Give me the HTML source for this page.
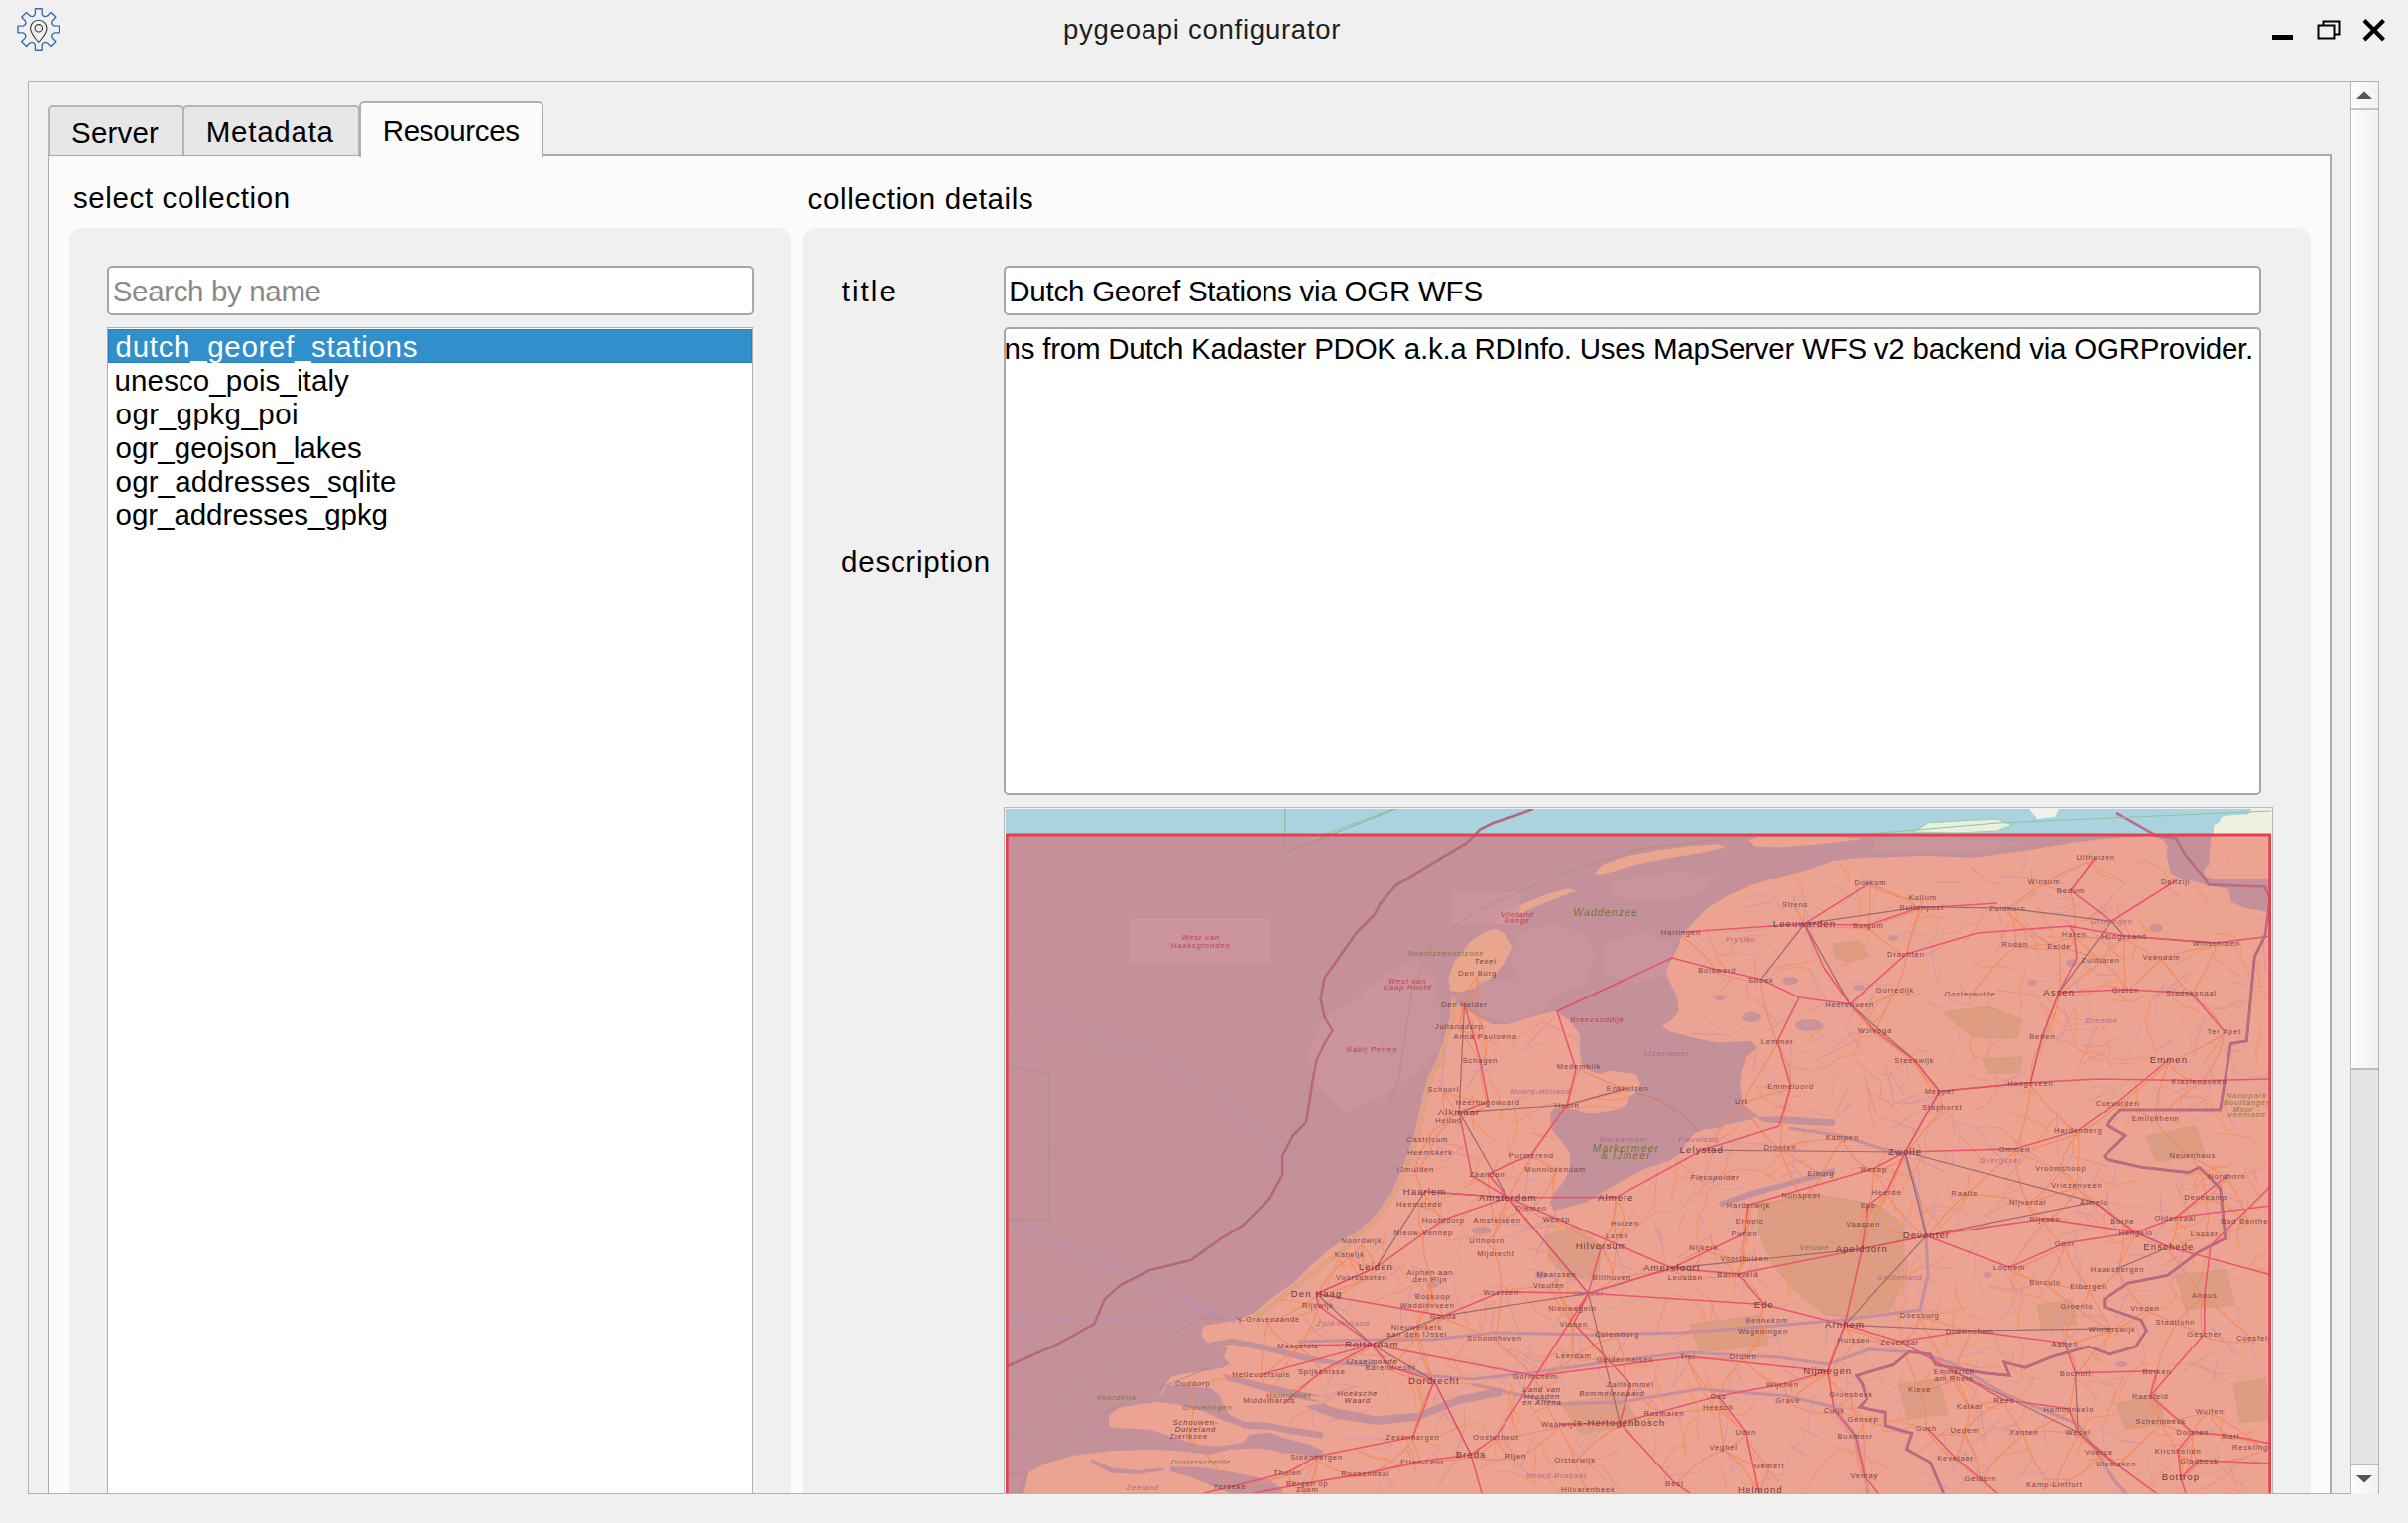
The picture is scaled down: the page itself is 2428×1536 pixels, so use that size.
<!DOCTYPE html>
<html><head><meta charset="utf-8">
<style>
*{margin:0;padding:0;box-sizing:border-box}
html,body{width:2428px;height:1536px;overflow:hidden;background:#f0f0f0;font-family:"Liberation Sans",sans-serif;color:#000}
.a{position:absolute}
.t{position:absolute;white-space:nowrap;font-size:29.5px;line-height:1}
</style></head><body>
<!-- title bar -->
<svg class="a" style="left:0;top:0" width="80" height="60" viewBox="0 0 80 60">
  <path fill="none" stroke="#3b6fa3" stroke-width="1.4" stroke-linejoin="round" d="M35.40 13.70 L35.40 8.70 L42.20 8.70 L42.20 13.70 Q43.58 17.95 47.57 15.92 L47.57 15.92 L51.10 12.39 L55.91 17.20 L52.38 20.73 Q50.35 24.72 54.60 26.10 L54.60 26.10 L59.60 26.10 L59.60 32.90 L54.60 32.90 Q50.35 34.28 52.38 38.27 L52.38 38.27 L55.91 41.80 L51.10 46.61 L47.57 43.08 Q43.58 41.05 42.20 45.30 L42.20 45.30 L42.20 50.30 L35.40 50.30 L35.40 45.30 Q34.02 41.05 30.03 43.08 L30.03 43.08 L26.50 46.61 L21.69 41.80 L25.22 38.27 Q27.25 34.28 23.00 32.90 L23.00 32.90 L18.00 32.90 L18.00 26.10 L23.00 26.10 Q27.25 24.72 25.22 20.73 L25.22 20.73 L21.69 17.20 L26.50 12.39 L30.03 15.92 Q34.02 17.95 35.40 13.70 Z"/>
  <g fill="none" stroke="#3a3a3a" stroke-width="1.1">
    <path d="M38.8 42.5 C34 37 30.6 33 30.6 28.4 A8.2 8.2 0 0 1 47 28.4 C47 33 43.6 37 38.8 42.5 Z"/>
    <circle cx="38.8" cy="28.3" r="3.7"/>
  </g>
</svg>
<div class="t" id="wtitle" style="left:1072px;top:16.3px;font-size:27.5px;letter-spacing:0.75px;color:#1e1e1e">pygeoapi configurator</div>
<div class="a" style="left:2291px;top:35px;width:21px;height:5px;background:#000"></div>
<svg class="a" style="left:2330px;top:15px" width="36" height="30" viewBox="2330 15 36 30">
  <rect x="2342.5" y="21.5" width="16" height="13" fill="none" stroke="#000" stroke-width="2"/>
  <rect x="2337.5" y="25.5" width="16" height="13" fill="#f0f0f0" stroke="#000" stroke-width="2"/>
</svg>
<svg class="a" style="left:2378px;top:14px" width="32" height="32" viewBox="2378 14 32 32">
  <path d="M2384 20.5 L2403.5 40 M2403.5 20.5 L2384 40" stroke="#000" stroke-width="4.2"/>
</svg>

<!-- outer scroll frame -->
<div class="a" style="left:28px;top:82px;width:2371px;height:1425px;border:1px solid #b2b2b2;overflow:hidden" id="frame">
</div>

<!-- tab pane -->
<div class="a" style="left:48px;top:155px;width:2303px;height:1351px;background:#fbfbfb;border:2px solid #a9a9a9;border-left:1px solid #ababab;border-bottom:none"></div>
<!-- tabs -->
<div class="a" style="left:48px;top:106px;width:138px;height:50px;background:#e7e7e7;border:2px solid #b5b5b5;border-bottom:none;border-radius:5px 5px 0 0"></div>
<div class="a" style="left:184px;top:106px;width:179px;height:50px;background:#e7e7e7;border:2px solid #b5b5b5;border-bottom:none;border-radius:5px 5px 0 0"></div>
<div class="a" style="left:362px;top:102px;width:186px;height:56px;background:#fbfbfb;border:2px solid #b0b0b0;border-bottom:none;border-radius:5px 5px 0 0"></div>
<div class="t" style="left:72px;top:119px;letter-spacing:0.2px">Server</div>
<div class="t" style="left:207.7px;top:118.4px;letter-spacing:0.757px">Metadata</div>
<div class="t" style="left:385.8px;top:117.2px;letter-spacing:-0.35px">Resources</div>

<div class="t" style="left:73.9px;top:184.8px;letter-spacing:0.631px">select collection</div>
<div class="t" style="left:814.6px;top:185.8px;letter-spacing:0.629px">collection details</div>

<!-- left group -->
<div class="a" style="left:70px;top:230px;width:728px;height:1300px;background:#f0f0f0;border-radius:13px"></div>
<div class="a" style="left:108px;top:268px;width:652px;height:50px;background:#fff;border:2px solid #a6a6a6;border-radius:5px"></div>
<div class="t" style="left:113.8px;top:278.7px;letter-spacing:-0.354px;color:#8a8a8a">Search by name</div>
<div class="a" style="left:108px;top:330px;width:651px;height:1200px;background:#fff;border:1px solid #b0b0b0"></div>
<div class="a" style="left:109px;top:332px;width:649px;height:34px;background:#3190cc;border:1px solid #2b7dba"></div>
<div class="t" style="left:116.6px;top:334.9px;letter-spacing:0.675px;color:#fff">dutch_georef_stations</div>
<div class="t" style="left:115.6px;top:369.2px;letter-spacing:0.106px">unesco_pois_italy</div>
<div class="t" style="left:116.6px;top:402.7px;letter-spacing:0.473px">ogr_gpkg_poi</div>
<div class="t" style="left:116.6px;top:437px;letter-spacing:0.025px">ogr_geojson_lakes</div>
<div class="t" style="left:116.6px;top:470.5px;letter-spacing:0.126px">ogr_addresses_sqlite</div>
<div class="t" style="left:116.6px;top:504.1px;letter-spacing:-0.065px">ogr_addresses_gpkg</div>

<!-- right group -->
<div class="a" style="left:810px;top:230px;width:1520px;height:1300px;background:#f0f0f0;border-radius:13px"></div>
<div class="t" style="left:848.7px;top:278.6px;letter-spacing:2.075px">title</div>
<div class="t" style="left:848.1px;top:551.9px;letter-spacing:0.74px">description</div>
<div class="a" style="left:1012px;top:268px;width:1268px;height:50px;background:#fff;border:2px solid #a6a6a6;border-radius:5px"></div>
<div class="t" style="left:1017.3px;top:278.6px;letter-spacing:-0.234px">Dutch Georef Stations via OGR WFS</div>
<div class="a" style="left:1012px;top:330px;width:1268px;height:472px;background:#fff;border:2px solid #a6a6a6;border-radius:5px;overflow:hidden">
  <div class="t" style="right:6px;top:4.8px;letter-spacing:-0.239px">ns from Dutch Kadaster PDOK a.k.a RDInfo. Uses MapServer WFS v2 backend via OGRProvider.</div>
</div>

<!-- map -->
<div class="a" style="left:1012px;top:814px;width:1280px;height:700px;border:1px solid #b8b8b8;background:#f0f0f0"></div>
<div class="a" style="left:1014px;top:816px;width:1276px;height:690px;overflow:hidden"><svg width="1276" height="690" viewBox="0 0 1276 690"><rect x="0" y="0" width="1276" height="26" fill="#aad3df"/><path d="M1217.7 26 L1218.3 16.6 L1223.7 13.3 L1226.3 8 L1233 6.6 L1253 5.3 L1256 0 L1276 0 L1276 26 Z" fill="#eef1e0"/><path d="M915 23 L930 14 L960 12 L1000 10 L1015 16 L1000 22 L960 24 Z" fill="#e8efe0" stroke="#9cd0a8" stroke-width="1.2"/><path d="M1032 0 L1062 0 L1058 8 L1040 10 Z" fill="#f1f1ea"/><rect x="0" y="26" width="1276" height="664" fill="#c4919a"/><path d="M449.2 190.0 L451.0 193.9 L474.2 208.9 L490.8 217.2 L505.8 217.2 L527.4 210.5 L552.3 203.9 L555.6 203.9 L672.5 149.5 L678.8 137.0 L680.9 128.7 L691.2 116.3 L707.8 99.7 L728.6 87.2 L751.4 76.8 L780.5 68.5 L811.7 60.2 L834.5 51.9 L853.2 49.8 L886.0 47.8 L876.0 48.7 L926.3 47.0 L976.7 48.7 L1027.0 41.9 L1077.3 33.6 L1110.9 29.4 L1144.5 27.7 L1144.5 25.2 L1278.7 25.2 L1278.7 200.0 L1277.9 690.0 L18.6 689.9 L22.6 669.6 L39.9 660.3 L66.4 652.3 L106.3 647.0 L105.0 633.7 L103.7 612.5 L113.0 604.5 L132.9 600.5 L152.8 597.9 L162.1 579.2 L167.4 572.6 L186.0 568.6 L207.3 566.0 L219.3 563.3 L225.9 559.3 L220.1 552.4 L224.3 542.0 L205.6 539.9 L197.3 531.6 L199.3 521.2 L224.3 517.1 L234.6 515.0 L249.2 508.8 L269.9 492.1 L290.7 477.6 L307.3 461.0 L323.9 446.5 L340.5 434.0 L353.5 427.7 L374.8 407.8 L389.4 386.5 L398.7 365.2 L408.0 340.0 L411.4 332.2 L415.9 311.0 L420.5 289.7 L426.6 268.4 L433.8 255.1 L441.2 233.9 L447.8 210.0 Z" fill="#eda392"/><path d="M448.3 182.7 L446.2 170.3 L452.4 153.7 L467.0 135.0 L481.5 124.6 L494.0 120.4 L504.4 126.7 L511.6 139.1 L504.4 153.7 L489.8 170.3 L473.2 180.6 L456.6 184.8 Z" fill="#e9a58e"/><path d="M494.0 113.2 L506.4 101.7 L527.2 93.4 L548.0 85.1 L568.7 79.9 L575.0 83.1 L562.5 87.2 L541.7 95.5 L531.3 99.7 L514.7 108.0 L498.1 114.2 Z" fill="#e9a58e"/><path d="M593.6 64.4 L601.9 56.1 L624.8 47.8 L655.9 41.5 L687.1 37.4 L718.2 35.3 L726.5 38.4 L697.5 44.6 L666.3 49.8 L635.2 56.1 L614.4 62.3 L597.8 66.4 Z" fill="#e9a58e"/><path d="M749.4 31.1 L759.8 28.0 L801.3 28.0 L842.8 28.0 L863.6 30.1 L822.0 35.3 L780.5 38.4 L755.6 37.4 Z" fill="#e9a58e"/><path d="M555.6 203.9 L557.3 205.5 L568.9 213.8 L578.9 227.1 L578.9 243.7 L580.5 257.0 L588.8 263.7 L598.8 267.0 L608.8 263.7 L635.3 267.0 L640.3 277.0 L635.3 285.3 L628.7 290.2 L627.0 296.9 L618.7 301.9 L602.1 305.2 L585.5 306.9 L577.2 303.5 L562.2 300.2 L552.3 301.9 L549.0 308.5 L550.6 323.5 L560.6 335.1 L568.9 346.7 L568.9 363.3 L562.2 376.6 L552.3 388.3 L549.0 396.6 L552.3 404.9 L560.6 403.2 L585.5 396.6 L602.1 386.6 L618.7 376.6 L643.6 363.3 L668.6 355.0 L681.8 346.7 L685.2 338.4 L695.1 326.8 L705.1 323.5 L718.4 321.8 L726.7 318.5 L751.6 313.5 L759.9 310.2 L743.3 296.9 L740.0 280.3 L741.6 263.7 L746.6 250.4 L758.3 240.4 L751.6 233.8 L718.4 235.4 L693.5 230.4 L668.6 223.8 L661.9 218.8 L671.9 212.2 L678.5 203.9 L676.9 188.9 L668.6 172.3 L665.2 164.0 L672.5 149.5 Z" fill="#c4919a"/><path d="M718.4 396.6 L751.6 384.9 L784.8 376.6 L818.1 366.7 L836.0 361.7 L836.0 368.3 L809.8 375.0 L768.2 386.6 L735.0 396.6 L721.7 401.5 Z" fill="#c4919a"/><path d="M756.6 311.0 L784.8 310.2 L809.8 311.8 L836.0 313.5 L836.0 320.1 L801.4 318.5 L764.9 316.0 Z" fill="#c4919a"/><path d="M152.8 597.9 L163.5 580.6 L186.0 581.9 L207.3 584.6 L215.3 591.2 L219.3 600.5 L225.9 611.1 L239.2 617.8 L265.8 619.1 L263.1 623.1 L239.2 623.1 L219.3 616.5 L199.3 607.2 L172.8 600.5 Z" fill="#c4919a"/><path d="M219.3 569.9 L239.2 573.9 L265.8 580.6 L292.4 585.9 L320.0 592.5 L301.1 591.8 L332.2 604.3 L373.8 612.6 L415.3 608.4 L456.8 591.8 L500.0 583.5 L500.0 591.8 L456.8 600.1 L415.3 616.7 L373.8 620.9 L332.2 614.6 L301.1 602.2 L320.0 599.2 L292.4 593.9 L265.8 588.6 L239.2 580.6 L223.3 576.6 Z" fill="#c4919a"/><path d="M103.7 623.1 L119.6 624.4 L146.2 625.8 L172.8 635.1 L192.7 640.4 L212.6 643.0 L239.2 639.0 L245.8 631.1 L265.8 628.4 L279.1 633.7 L305.6 640.4 L320.0 647.0 L320.0 655.0 L292.4 649.7 L279.1 649.7 L272.4 647.0 L252.5 644.4 L225.9 645.7 L206.0 651.0 L172.8 647.0 L146.2 645.7 L119.6 647.0 L106.3 647.0 L105.0 633.7 Z" fill="#c4919a"/><path d="M166.1 663.0 L199.3 664.3 L232.6 669.6 L265.8 676.3 L279.1 686.9 L279.1 689.9 L225.9 689.9 L186.0 673.6 L166.1 668.3 Z" fill="#c4919a"/><path d="M86.4 655.0 L106.3 664.3 L132.9 667.0 L159.5 664.3 L159.5 667.0 L132.9 670.9 L106.3 669.6 L86.4 659.0 Z" fill="#c4919a"/><path d="M225.9 611.1 L239.2 617.8 L265.8 619.1 L285.7 623.1 L320.0 628.4 L320.0 635.1 L285.7 629.7 L265.8 625.8 L239.2 624.4 Z" fill="#c4919a"/><path d="M205.6 537.8 L228.4 533.7 L269.9 542.0 L301.1 550.3 L332.2 556.5 L373.8 558.6 L373.8 562.7 L332.2 560.7 L301.1 556.5 L269.9 548.2 L228.4 539.9 L207.6 542.0 Z" fill="#c4919a"/><path d="M1150.6 26.0 L1215.7 26.0 L1214.4 39.9 L1213.0 56.5 L1209.0 59.8 L1208.4 66.4 L1216.4 70.4 L1239.6 71.1 L1276.0 70.4 L1276.0 104.0 L1250.0 100.0 L1236.0 94.0 L1233.0 81.0 L1213.0 77.0 L1196.4 72.4 L1183.1 69.1 L1175.1 65.1 L1170.5 46.5 L1171.8 37.2 L1166.5 30.6 Z" fill="#c4919a"/><path d="M531.6 0.0 L510.0 8.0 L491.7 13.9 L478.4 20.6 L465.0 34.0 L438.0 50.0 L393.4 77.1 L377.4 95.7 L372.1 106.3 L353.5 124.9 L334.9 151.5 L321.6 170.1 L317.6 191.4 L321.6 210.0 L329.6 223.3 L322.9 233.9 L313.6 252.5 L309.6 273.8 L303.0 316.3 L289.7 329.6 L279.1 350.0 L279.1 369.2 L265.8 393.2 L239.2 419.7 L215.9 434.0 L186.9 454.8 L145.3 465.1 L116.3 479.7 L99.7 494.2 L89.3 519.1 L51.9 539.9 L0.0 562.7" fill="none" stroke="#b8687c" stroke-width="2.4"/><path d="M1269.9 127.6 L1259.3 148.8 L1251.3 233.9 L1235.3 236.5 L1224.7 303.0 L1123.7 303.0 L1110.4 318.9 L1129.0 329.6 L1107.8 350.0 L1110.4 353.3 L1145.0 361.3 L1192.8 366.6 L1203.5 361.3 L1224.7 382.5 L1230.0 433.0 L1203.5 446.3 L1171.6 470.2 L1131.7 478.2 L1107.8 494.2 L1107.8 502.1 L1145.0 515.4 L1150.3 526.0 L1139.7 542.0 L1113.1 550.0 L1091.8 542.0 L1054.6 552.6 L1028.0 563.3 L1006.8 557.9 L1012.1 571.2 L985.5 568.6 L937.7 560.6 L932.4 550.0 L911.1 547.3 L895.1 560.6 L857.9 571.2 L863.3 579.2 L868.6 595.1 L860.6 603.1 L887.2 608.4 L887.2 621.7 L913.8 629.7 L908.4 645.6 L932.4 658.9 L945.6 690.0" fill="none" stroke="#b86a7e" stroke-width="2.6"/><path d="M555.6 203.9 L672.5 149.5" fill="none" stroke="#d9684f" stroke-width="1.5"/><path d="M759.6 398.5 L812.8 387.8 L879.2 398.5 L905.8 419.7 L905.8 472.9 L892.5 504.8 L852.6 512.8 L826.0 510.1 L799.5 488.8 L772.9 459.6 L759.6 427.7 Z" fill="#dc9c80" stroke="#c9a07a" stroke-width="1" opacity="0.85"/><path d="M545.0 430.0 L575.0 420.0 L600.0 440.0 L598.0 470.0 L570.0 475.0 L548.0 455.0 Z" fill="#dc9c80" stroke="#c9a07a" stroke-width="1" opacity="0.85"/><path d="M945.0 205.0 L990.0 199.0 L1025.0 212.0 L1020.0 231.0 L975.0 230.0 Z" fill="#dc9c80" stroke="#c9a07a" stroke-width="1" opacity="0.85"/><path d="M985.0 252.0 L1025.0 250.0 L1022.0 266.0 L990.0 266.0 Z" fill="#dc9c80" stroke="#c9a07a" stroke-width="1" opacity="0.85"/><path d="M834.0 136.0 L860.0 133.0 L871.0 148.0 L850.0 154.0 L836.0 150.0 Z" fill="#dc9c80" stroke="#c9a07a" stroke-width="1" opacity="0.85"/><path d="M1238.0 580.0 L1270.0 574.0 L1275.0 615.0 L1245.0 619.0 Z" fill="#dc9c80" stroke="#c9a07a" stroke-width="1" opacity="0.85"/><path d="M1120.0 600.0 L1160.0 590.0 L1170.0 620.0 L1130.0 625.0 Z" fill="#dc9c80" stroke="#c9a07a" stroke-width="1" opacity="0.85"/><path d="M900.0 580.0 L940.0 575.0 L950.0 610.0 L910.0 615.0 Z" fill="#dc9c80" stroke="#c9a07a" stroke-width="1" opacity="0.85"/><path d="M1180.0 470.0 L1230.0 465.0 L1240.0 500.0 L1190.0 505.0 Z" fill="#dc9c80" stroke="#c9a07a" stroke-width="1" opacity="0.85"/><path d="M1040.0 500.0 L1075.0 495.0 L1080.0 520.0 L1045.0 525.0 Z" fill="#dc9c80" stroke="#c9a07a" stroke-width="1" opacity="0.85"/><path d="M690.0 520.0 L760.0 510.0 L770.0 540.0 L700.0 548.0 Z" fill="#dc9c80" stroke="#c9a07a" stroke-width="1" opacity="0.85"/><path d="M560.0 600.0 L620.0 590.0 L640.0 620.0 L580.0 630.0 Z" fill="#dc9c80" stroke="#c9a07a" stroke-width="1" opacity="0.85"/><path d="M1150.0 330.0 L1200.0 320.0 L1210.0 350.0 L1160.0 355.0 Z" fill="#dc9c80" stroke="#c9a07a" stroke-width="1" opacity="0.85"/><path d="M451.8 190.0 L450.5 210.0 L444.4 233.9 L437.2 255.1 L430.0 268.4 L424.2 289.7 L419.4 311.0 L415.1 332.2 L412.0 340.0 L402.7 365.2 L393.4 386.5 L378.7 407.8 L357.5 427.7 L338.9 446.3 L317.6 462.3 L296.3 478.2 L269.8 499.5 L251.2 512.8" fill="none" stroke="#d9a27e" stroke-width="5" opacity="0.75"/><path d="M637.0 286.1 L660.3 293.6 L685.2 310.2 L698.5 325.1" fill="none" stroke="#d8785a" stroke-width="1.2" opacity="0.9"/><path d="M514.7 124.6 L552.1 116.3 L583.3 124.6 L593.6 145.3 L583.3 176.5 L552.1 186.9 L521.0 182.7 L510.6 155.7 Z" fill="#cc959c" opacity="0.75"/><path d="M604.0 135.0 L645.6 124.6 L672.5 135.0 L666.3 166.1 L635.2 176.5 L604.0 166.1 Z" fill="#cc959c" opacity="0.75"/><path d="M614.4 72.7 L676.7 62.3 L718.2 68.5 L697.5 87.2 L645.6 93.4 L610.3 87.2 Z" fill="#cc959c" opacity="0.75"/><path d="M876.0 30.2 L943.1 28.5 L1027.0 33.6 L993.4 43.6 L909.6 45.3 L876.0 41.9 Z" fill="#cc959c" opacity="0.75"/><path d="M474.2 174.0 L519.1 170.6 L555.6 183.9 L544.0 202.2 L505.8 217.2 L479.2 207.2 Z" fill="#cc959c" opacity="0.75"/><ellipse cx="791" cy="173" rx="8" ry="4" fill="#c4919a" opacity="0.9"/><ellipse cx="752" cy="210" rx="10" ry="5" fill="#c4919a" opacity="0.9"/><ellipse cx="810" cy="218" rx="14" ry="6" fill="#c4919a" opacity="0.9"/><ellipse cx="895" cy="130" rx="5" ry="3" fill="#c4919a" opacity="0.9"/><ellipse cx="1075" cy="155" rx="6" ry="4" fill="#c4919a" opacity="0.9"/><ellipse cx="1160" cy="120" rx="7" ry="4" fill="#c4919a" opacity="0.9"/><ellipse cx="720" cy="190" rx="6" ry="3" fill="#c4919a" opacity="0.9"/><ellipse cx="860" cy="180" rx="6" ry="3" fill="#c4919a" opacity="0.9"/><ellipse cx="1035" cy="175" rx="5" ry="3" fill="#c4919a" opacity="0.9"/><ellipse cx="480" cy="425" rx="10" ry="4" fill="#c4919a" opacity="0.9"/><ellipse cx="540" cy="470" rx="6" ry="4" fill="#c4919a" opacity="0.9"/><ellipse cx="600" cy="530" rx="6" ry="3" fill="#c4919a" opacity="0.9"/><ellipse cx="1125" cy="560" rx="6" ry="3" fill="#c4919a" opacity="0.9"/><ellipse cx="990" cy="470" rx="5" ry="3" fill="#c4919a" opacity="0.9"/><ellipse cx="430" cy="480" rx="6" ry="3" fill="#c4919a" opacity="0.9"/><path d="M829.0 560.0 L780.0 553.0 L688.0 548.0 L620.0 556.0 L534.0 568.0 L470.0 575.0 L432.0 572.0 L400.0 566.0" fill="none" stroke="#c08c9e" stroke-width="3.2" opacity="0.9"/><path d="M846.0 515.0 L764.0 522.0 L680.0 528.0 L590.0 530.0 L493.0 528.0 L430.0 535.0 L369.0 535.0 L295.0 537.0" fill="none" stroke="#c08c9e" stroke-width="3.2" opacity="0.9"/><path d="M870.0 690.0 L857.0 632.0 L835.0 603.0 L789.0 592.0 L700.0 585.0 L620.0 598.0 L560.0 600.0 L470.0 580.0" fill="none" stroke="#c08c9e" stroke-width="3.2" opacity="0.9"/><path d="M846.0 515.0 L922.0 505.0 L930.0 470.0 L928.0 430.0 L920.0 390.0 L907.0 350.0 L843.0 330.0 L790.0 322.0" fill="none" stroke="#c08c9e" stroke-width="3.2" opacity="0.9"/><path d="M956.0 560.0 L1007.0 590.0 L1081.0 620.0 L1120.0 680.0 L1130.0 690.0" fill="none" stroke="#c08c9e" stroke-width="3.2" opacity="0.9"/><path d="M829.0 560.0 L870.0 545.0 L920.0 548.0 L956.0 560.0" fill="none" stroke="#c08c9e" stroke-width="3.2" opacity="0.9"/><path d="M1121.1 298.5 Q1137.5 300.9 1159.6 314.5 M843.3 333.9 Q835.1 344.9 822.0 369.6 M1115.7 526.9 Q1092.4 532.1 1067.9 541.5 M1079.9 382.1 Q1048.2 390.6 1030.7 398.8 M1182.2 649.5 Q1185.4 653.6 1203.5 659.8 M876.5 226.3 Q889.6 234.6 916.4 256.0 M494.4 636.2 Q480.5 650.3 469.1 654.0 M346.8 452.0 Q324.2 467.5 313.6 491.8 M427.9 477.2 Q431.3 492.6 430.6 493.7 M441.2 513.9 Q468.3 523.1 493.0 535.7 M1179.5 414.8 Q1183.8 422.5 1172.9 444.8 M1182.2 649.5 Q1189.3 660.1 1184.9 677.4 M547.5 482.5 Q554.5 495.9 572.8 521.6 M1030.7 398.8 Q1036.3 412.5 1048.0 416.1 M923.8 101.7 Q910.7 126.8 907.9 149.3 M869.8 120.3 Q873.1 96.7 872.0 77.1 M1097.2 399.3 Q1112.6 401.7 1126.4 418.0 M1067.9 440.8 Q1072.8 457.7 1091.8 484.1 M846.0 523.2 Q853.5 529.6 855.3 538.3 M295.0 543.7 Q273.4 559.8 257.8 573.2 M1164.9 620.2 Q1172.8 631.6 1182.2 649.5 M1074.0 85.2 Q1080.4 110.0 1077.3 128.5 M369.4 542.9 Q340.1 557.5 318.9 569.7 M1179.5 414.8 Q1194.6 428.8 1208.8 430.7 M671.9 466.1 Q682.2 467.2 685.2 475.1 M358.8 438.1 Q360.5 438.9 346.8 452.0 M534.2 574.8 Q544.9 603.2 558.2 623.4 M554.2 365.6 Q549.3 390.7 555.5 416.1 M723.7 646.0 Q739.6 658.0 770.2 664.6 M1067.9 440.8 Q1044.2 454.2 1012.1 465.3 M1063.9 365.1 Q1077.9 370.6 1079.9 382.1 M430.6 493.7 Q431.1 500.0 425.3 503.3 M414.6 532.2 Q402.6 548.2 388.0 565.7 M916.4 256.0 Q935.8 286.5 944.3 302.8 M1006.8 598.7 Q1016.3 617.3 1026.7 630.6 M284.4 672.0 Q287.3 680.6 304.3 682.7 M1033.4 278.6 Q1059.7 310.8 1081.2 327.3 M441.2 513.9 Q433.1 519.6 414.6 532.2 M1203.5 659.8 Q1192.4 671.3 1184.9 677.4 M446.5 317.2 Q429.6 332.2 427.9 348.5 M1161.0 569.7 Q1157.6 588.8 1164.9 620.2 M745.0 456.0 Q734.6 468.2 738.3 471.9 M761.8 174.5 Q764.1 201.7 778.2 236.9 M907.1 349.0 Q896.1 374.8 888.5 388.7 M1127.7 131.0 Q1109.2 141.9 1104.2 154.5 M1067.9 440.8 Q1058.7 466.5 1048.0 479.9 M427.9 470.0 Q433.0 479.4 427.9 477.2 M1099.2 50.8 Q1083.1 66.6 1074.0 85.2 M427.9 470.0 Q424.3 492.8 425.3 503.3 M1104.2 154.5 Q1124.1 164.2 1129.4 185.0 M414.6 532.2 Q418.1 551.6 431.9 579.5 M441.2 285.3 Q439.6 301.0 446.5 317.2 M1078.5 571.6 Q1076.6 585.9 1071.9 607.7 M1081.2 327.3 Q1064.6 344.9 1063.9 365.1 M1079.9 503.5 Q1095.7 516.3 1115.7 526.9 M457.1 222.3 Q477.6 230.0 483.7 231.6 M745.0 430.7 Q741.9 453.2 738.3 471.9 M749.0 402.3 Q749.8 422.0 745.0 456.0 M483.7 231.6 Q487.4 248.3 478.4 256.0 M1210.1 393.5 Q1215.4 416.9 1208.8 430.7 M738.3 471.9 Q710.0 471.9 685.2 475.1 M852.6 592.8 Q837.6 602.9 835.3 608.8 M869.9 402.3 Q860.2 404.9 864.6 421.4 M1006.8 598.7 Q984.8 596.3 972.2 604.8 M486.4 370.9 Q505.7 354.0 530.2 351.5 M1006.8 598.7 Q978.9 608.1 966.9 628.7 M624.6 557.8 Q620.9 568.1 629.9 582.7 M1081.2 327.3 Q1041.7 342.6 1017.4 345.9 M1081.2 327.3 Q1082.4 349.1 1079.9 382.1 M1017.4 345.9 Q1036.7 353.1 1063.9 365.1 M530.2 351.5 Q540.0 352.5 554.2 365.6 M1077.3 128.5 Q1075.3 142.6 1062.2 140.9 M746.3 631.4 Q753.1 660.6 760.9 690.4 M446.5 317.2 Q429.2 320.1 425.2 335.8 M410.6 636.2 Q412.7 644.6 419.9 660.6 M600.7 443.5 Q611.3 453.9 611.3 475.1 M414.6 525.1 Q407.0 535.9 414.6 532.2 M1210.1 393.5 Q1195.3 398.5 1179.5 414.8 M578.0 262.1 Q572.7 274.1 566.1 301.2 M788.8 598.7 Q812.5 611.4 835.3 608.8 M875.2 365.6 Q887.7 380.3 888.5 388.7 M791.5 282.1 Q782.4 310.9 780.9 344.0 M828.7 569.7 Q835.3 585.6 852.6 592.8 M499.7 489.7 Q496.9 517.2 493.0 535.7 M888.5 388.7 Q873.8 400.6 864.6 421.4 M441.2 285.3 Q454.1 304.7 457.1 308.6 M1091.8 484.1 Q1091.5 498.7 1079.9 503.5 M1033.4 278.6 Q1030.5 316.1 1017.4 345.9 M571.4 505.7 Q567.7 513.9 572.8 521.6 M872.0 77.1 Q895.6 81.9 923.8 101.7 M718.4 606.1 Q683.6 605.6 663.9 612.2 M687.8 555.1 Q699.2 578.1 718.4 595.0 M313.6 655.8 Q316.3 668.4 304.3 682.7 M414.6 525.1 Q399.0 541.8 369.4 542.9 M822.0 369.6 Q819.3 378.7 802.1 392.2 M457.1 308.6 Q447.3 308.5 446.5 317.2 M616.6 532.2 Q589.8 538.1 572.8 553.5 M1071.9 607.7 Q1089.2 635.9 1102.5 651.3 M495.7 417.4 Q495.8 427.3 485.1 437.9 M1077.3 128.5 Q1050.0 138.5 1017.8 138.9 M615.4 394.6 Q609.4 416.3 616.6 432.8 M1121.1 466.6 Q1113.0 479.9 1091.8 484.1 M358.8 475.1 Q340.2 483.1 313.6 491.8 M944.3 302.8 Q920.6 330.5 907.1 349.0 M743.7 555.1 Q760.9 573.9 783.5 583.0 M469.1 654.0 Q452.0 655.6 419.9 660.6 M1159.6 314.5 Q1176.6 340.3 1196.8 351.8 M427.9 348.5 Q424.2 352.2 413.3 366.4 M957.6 657.2 Q964.3 662.2 982.9 678.4 M966.9 628.7 Q981.4 658.5 982.9 678.4 M425.3 503.3 Q427.6 513.8 441.2 513.9 M486.4 370.9 Q504.0 385.4 506.3 394.8 M956.3 576.9 Q936.6 583.2 921.7 588.0 M421.3 430.2 Q418.7 442.3 427.9 470.0 M780.9 344.0 Q809.0 359.2 822.0 369.6 M872.0 77.1 Q898.8 91.4 924.7 91.9 M742.3 296.7 Q760.5 326.3 780.9 344.0 M767.6 518.4 Q760.9 532.1 743.7 555.1 M687.8 555.1 Q711.8 551.8 743.7 555.1 M924.7 91.9 Q920.1 98.2 923.8 101.7 M1012.1 465.3 Q1026.2 471.3 1048.0 479.9 M313.6 655.8 Q332.3 671.0 362.8 673.1 M506.3 394.8 Q515.9 399.1 530.2 404.7 M928.4 626.6 Q944.3 648.4 957.6 657.2 M1010.2 103.2 Q1034.9 128.7 1062.2 140.9 M1231.4 372.8 Q1220.8 383.7 1210.1 393.5 M1231.4 372.8 Q1243.1 387.7 1254.0 418.0 M566.1 301.2 Q595.7 287.6 627.3 284.2 M425.3 503.3 Q412.0 522.5 414.6 532.2 M572.8 553.5 Q593.5 555.2 624.6 557.8 M558.2 623.4 Q569.8 642.0 574.1 658.8 M1077.3 128.5 Q1099.7 130.0 1127.7 131.0 M616.6 432.8 Q609.5 442.7 600.7 443.5 M566.1 301.2 Q541.8 327.3 530.2 351.5 M572.8 521.6 Q590.7 523.3 616.6 532.2 M1048.0 479.9 Q1074.3 482.1 1091.8 484.1 M572.8 553.5 Q554.5 568.3 534.2 574.8 M422.6 388.7 Q426.5 393.8 417.3 400.7 M558.2 623.4 Q528.1 629.9 494.4 636.2 M304.3 682.7 Q304.5 689.1 304.3 689.3 M1165.4 151.5 Q1179.7 170.5 1195.6 188.4 M313.6 655.8 Q298.6 671.0 284.4 672.0 M313.6 491.8 Q317.5 503.6 315.0 503.3 M1010.2 103.2 Q1021.1 117.2 1017.8 138.9 M413.3 366.4 Q418.9 384.6 422.6 388.7 M419.9 660.6 Q396.8 661.0 362.8 673.1 M1172.9 255.5 Q1160.2 284.1 1159.6 314.5 M425.3 503.3 Q413.1 510.1 414.6 525.1 M764.9 502.5 Q759.4 513.2 767.6 518.4 M1062.2 187.6 Q1058.3 216.0 1045.3 231.6 M1196.8 631.4 Q1194.6 649.1 1203.5 659.8 M783.5 583.0 Q788.7 585.1 788.8 598.7 M1063.9 365.1 Q1086.7 389.7 1097.2 399.3 M313.6 491.8 Q284.6 511.7 264.5 517.1 M1115.7 526.9 Q1095.5 549.0 1078.5 571.6 M1102.5 651.3 Q1087.7 672.8 1057.3 683.7 M441.2 416.9 Q425.8 422.5 421.3 430.2 M956.3 570.2 Q964.5 584.9 972.2 604.8 M475.7 167.8 Q474.8 196.8 483.7 231.6 M425.2 335.8 Q430.1 334.5 427.9 348.5 M851.1 199.8 Q864.7 212.1 876.5 226.3 M764.9 502.5 Q756.5 513.1 763.6 529.0 M855.3 538.3 Q844.0 554.2 828.7 569.7 M1254.0 418.0 Q1224.4 432.1 1208.8 430.7 M257.8 573.2 Q266.4 593.6 265.8 599.0 M1214.1 609.6 Q1199.1 616.7 1196.8 631.4 M555.5 472.4 Q556.1 493.5 571.4 505.7 M921.7 513.1 Q943.3 515.1 972.2 529.0 M921.7 513.1 Q937.8 548.2 956.3 570.2 M1165.4 151.5 Q1152.5 164.4 1129.4 185.0 M928.4 626.6 Q942.0 634.4 966.9 628.7 M486.4 298.0 Q467.6 310.8 446.5 317.2 M346.8 452.0 Q346.2 456.5 358.8 475.1 M1102.5 651.3 Q1114.1 656.1 1119.7 663.3 M1164.9 620.2 Q1135.5 648.8 1119.7 663.3 M315.0 503.3 Q307.2 528.3 295.0 543.7 M1026.7 630.6 Q1035.3 662.8 1057.3 683.7 M750.3 418.2 Q740.7 430.3 745.0 430.7 M441.2 513.9 Q427.2 516.9 414.6 525.1 M851.1 199.8 Q874.9 199.1 897.0 184.7 M555.5 416.1 Q574.4 423.9 600.7 443.5 M835.3 608.8 Q850.4 609.0 864.6 617.6 M855.3 538.3 Q872.3 533.6 901.8 539.7 M362.8 673.1 Q326.4 673.1 304.3 682.7 M1017.8 138.9 Q992.1 160.9 972.5 189.2 M1214.1 609.6 Q1193.7 611.5 1164.9 620.2 M1203.5 276.8 Q1181.6 290.5 1159.6 314.5 M1235.3 634.8 Q1250.2 632.7 1270.0 646.0 M1214.1 609.6 Q1238.1 620.0 1270.0 646.0 M1154.3 594.7 Q1179.3 613.9 1196.8 631.4 M663.9 612.2 Q641.9 597.0 629.9 582.7 M738.3 471.9 Q758.6 480.9 764.9 502.5 M1063.9 365.1 Q1052.4 380.9 1030.7 398.8 M530.2 404.7 Q542.8 415.8 555.5 416.1 M1104.2 154.5 Q1081.5 171.2 1062.2 187.6 M346.8 452.0 Q363.1 466.4 373.4 465.3 M956.3 570.2 Q953.8 578.9 956.3 576.9 M427.9 477.2 Q429.9 492.4 425.3 503.3 M369.4 542.9 Q377.2 551.9 388.0 565.7 M475.7 167.8 Q459.3 189.1 457.1 222.3 M1172.9 255.5 Q1181.3 270.0 1203.5 276.8 M547.5 482.5 Q519.7 480.7 499.7 489.7 M1149.0 505.7 Q1125.7 521.8 1115.7 526.9 M485.1 437.9 Q495.7 447.0 494.4 450.6 M1154.3 594.7 Q1156.1 603.3 1164.9 620.2 M869.8 120.3 Q893.5 110.4 923.8 101.7 M663.9 612.2 Q636.1 616.3 619.3 622.1 M856.6 635.4 Q857.5 662.7 865.9 675.2 M486.4 298.0 Q479.3 304.1 457.1 308.6 M1121.1 298.5 Q1097.1 320.4 1081.2 327.3 M916.4 256.0 Q926.0 269.4 941.7 287.4 M703.8 444.8 Q679.9 453.6 671.9 466.1 M1164.9 620.2 Q1180.4 625.8 1196.8 631.4 M888.5 388.7 Q903.7 411.1 928.4 433.4 M1208.8 493.2 Q1200.9 508.9 1208.8 532.2 M1026.7 630.6 Q998.2 652.9 982.9 678.4 M750.3 418.2 Q740.3 429.5 745.0 456.0 M1161.0 569.7 Q1154.5 577.9 1154.3 594.7 M972.2 604.8 Q970.9 617.2 966.9 628.7 M1081.2 631.4 Q1095.9 643.9 1102.5 651.3 M835.3 608.8 Q849.4 628.2 856.6 635.4 M547.5 482.5 Q557.7 491.3 571.4 505.7 M417.3 400.7 Q437.0 403.2 441.2 416.9 M1139.7 429.9 Q1159.9 439.6 1172.9 444.8 M852.6 592.8 Q851.3 610.6 864.6 617.6 M921.7 513.1 Q918.0 528.4 901.8 539.7 M805.4 118.9 Q804.5 113.9 796.1 98.9 M846.0 523.2 Q831.6 546.8 828.7 569.7 M864.6 617.6 Q865.3 651.8 865.9 675.2 M430.6 493.7 Q440.8 509.0 441.2 513.9 M427.9 470.0 Q430.6 488.1 430.6 493.7 M875.2 365.6 Q875.5 387.0 869.9 402.3 M431.9 579.5 Q416.9 600.3 410.6 636.2 M295.0 543.7 Q274.5 569.1 265.8 599.0 M972.2 529.0 Q957.9 558.3 956.3 576.9 M703.8 444.8 Q695.4 462.0 685.2 475.1 M828.7 569.7 Q834.0 592.1 835.3 608.8 M1208.8 493.2 Q1194.0 498.8 1179.5 520.3 M315.0 503.3 Q294.5 514.2 264.5 517.1 M284.4 672.0 Q255.2 679.8 225.9 686.4 M966.9 389.5 Q1001.3 387.2 1030.7 398.8 M1017.4 345.9 Q995.9 363.7 966.9 389.5 M746.3 631.4 Q751.4 644.2 770.2 664.6 M358.8 438.1 Q362.5 451.9 358.8 475.1 M410.6 636.2 Q390.5 662.3 362.8 673.1 M718.4 606.1 Q732.3 616.9 746.3 631.4 M1121.1 466.6 Q1134.7 489.1 1149.0 505.7 M554.2 365.6 Q546.5 387.0 530.2 404.7 M723.7 646.0 Q744.6 661.4 760.9 690.4 M417.3 400.7 Q413.7 411.5 421.3 430.2 M1220.8 138.1 Q1212.1 160.1 1195.6 188.4 M1139.7 429.9 Q1131.5 440.4 1121.1 466.6 M743.7 555.1 Q724.0 571.4 718.4 595.0 M846.0 523.2 Q876.7 534.5 901.8 539.7 M494.4 450.6 Q499.9 466.8 499.7 489.7 M805.4 118.9 Q837.9 119.0 869.8 120.3 M414.6 532.2 Q391.5 531.4 369.4 542.9 M295.0 543.7 Q313.2 551.9 318.9 569.7 M888.5 388.7 Q886.9 402.5 869.9 402.3 M703.8 444.8 Q716.7 449.7 745.0 456.0 M869.9 402.3 Q871.7 432.0 863.3 446.7 M828.7 569.7 Q807.9 580.5 788.8 598.7 M486.4 370.9 Q486.4 401.3 495.7 417.4 M1017.4 345.9 Q1019.4 373.7 1030.7 398.8 M966.9 389.5 Q941.9 411.8 928.4 433.4 M1067.9 541.5 Q1080.4 550.7 1078.5 571.6 M358.8 438.1 Q371.2 451.8 373.4 465.3 M907.1 349.0 Q897.3 360.6 875.2 365.6 M1208.8 532.2 Q1229.8 540.6 1259.3 536.2 M718.4 606.1 Q720.8 618.4 723.7 646.0 M388.0 565.7 Q402.0 572.5 431.9 579.5 M1127.7 131.0 Q1127.8 154.8 1129.4 185.0 M671.9 466.1 Q635.9 468.1 611.3 475.1 M924.7 91.9 Q913.4 126.0 907.9 149.3 M1179.5 520.3 Q1162.3 549.0 1161.0 569.7 M864.6 617.6 Q866.0 620.4 856.6 635.4 M469.1 654.0 Q498.5 658.1 514.3 655.3 M828.7 569.7 Q812.5 573.0 783.5 583.0 M972.2 529.0 Q962.2 547.9 956.3 570.2 M441.2 285.3 Q471.8 293.1 486.4 298.0 M888.5 388.7 Q873.7 416.5 863.3 446.7 M1026.7 630.6 Q1050.4 623.8 1081.2 631.4 M495.7 417.4 Q488.7 439.4 494.4 450.6 M284.4 672.0 Q290.9 687.6 304.3 689.3 M1079.9 503.5 Q1069.9 518.8 1067.9 541.5 M530.2 351.5 Q518.4 368.2 506.3 394.8 M571.4 505.7 Q570.1 536.9 572.8 553.5 M1077.3 128.5 Q1096.9 146.5 1104.2 154.5 M941.7 287.4 Q945.1 301.7 944.3 302.8 M1149.0 505.7 Q1171.3 513.8 1179.5 520.3 M921.7 588.0 Q928.6 600.1 928.4 626.6 M358.8 475.1 Q340.6 488.4 315.0 503.3 M1127.7 131.0 Q1150.6 143.6 1165.4 151.5 M723.7 646.0 Q695.7 657.1 674.6 682.7 M1195.6 188.4 Q1219.0 201.8 1228.7 227.1 M414.6 525.1 Q422.8 549.8 431.9 579.5 M1228.7 227.1 Q1197.6 245.1 1172.9 255.5 M791.5 282.1 Q792.5 255.7 778.2 236.9 M966.9 628.7 Q964.7 639.8 957.6 657.2 M864.6 421.4 Q897.4 425.7 928.4 433.4 M1172.9 444.8 Q1185.5 463.6 1208.8 493.2 M746.3 631.4 Q730.3 645.2 723.7 646.0 M897.0 184.7 Q886.7 201.0 876.5 226.3 M457.1 222.3 Q474.3 247.1 478.4 256.0 M901.8 539.7 Q910.9 558.1 921.7 588.0 M749.0 402.3 Q742.1 410.0 745.0 430.7 M619.3 622.1 Q594.2 633.9 574.1 658.8 M1220.8 138.1 Q1188.9 140.9 1165.4 151.5 M763.6 529.0 Q754.8 548.2 743.7 555.1 M907.9 149.3 Q906.4 165.6 897.0 184.7 M629.9 582.7 Q623.2 602.8 619.3 622.1 M1048.0 416.1 Q1028.1 438.1 1012.1 465.3 M718.4 595.0 Q725.3 609.6 746.3 631.4 M1071.9 607.7 Q1084.0 613.6 1081.2 631.4 M1047.1 76.0 Q1060.6 82.7 1074.0 85.2 M1126.4 418.0 Q1129.6 437.8 1121.1 466.6 M1091.8 484.1 Q1100.1 501.5 1115.7 526.9 M780.9 344.0 Q789.9 367.2 802.1 392.2 M1196.8 631.4 Q1198.1 660.0 1184.9 677.4 M462.5 199.7 Q479.1 208.0 483.7 231.6 M745.0 430.7 Q737.5 446.7 745.0 456.0 M680.9 127.2 Q705.4 145.7 717.2 165.0 M1210.1 393.5 Q1233.4 397.8 1254.0 418.0 M572.8 521.6 Q571.1 544.4 572.8 553.5 M506.3 394.8 Q500.9 422.0 485.1 437.9 M791.5 282.1 Q774.5 285.4 742.3 296.7 M1048.0 479.9 Q1057.7 486.2 1079.9 503.5 M717.2 165.0 Q739.9 172.7 761.8 174.5 M1196.8 351.8 Q1210.5 376.2 1210.1 393.5 M558.2 623.4 Q538.6 643.6 514.3 655.3 M742.3 296.7 Q759.6 267.6 778.2 236.9 M611.3 475.1 Q584.0 494.9 571.4 505.7 M770.2 664.6 Q761.3 684.2 760.9 690.4 M1062.2 140.9 Q1064.5 161.1 1062.2 187.6 M1045.3 231.6 Q1033.4 251.1 1033.4 278.6 M313.6 655.8 Q311.1 675.7 304.3 689.3 M1179.5 520.3 Q1187.9 519.4 1208.8 532.2 M616.6 432.8 Q614.3 455.3 611.3 475.1 M1010.2 103.2 Q1026.9 85.2 1047.1 76.0 M506.3 394.8 Q502.6 398.3 495.7 417.4 M578.0 262.1 Q599.5 272.5 627.3 284.2 M1228.7 227.1 Q1223.4 254.3 1203.5 276.8 M1071.9 607.7 Q1055.4 618.8 1026.7 630.6 M1047.1 76.0 Q1068.9 59.4 1099.2 50.8 M624.6 420.1 Q620.0 435.1 600.7 443.5 M616.6 532.2 Q617.5 537.3 624.6 557.8 M1126.4 418.0 Q1133.0 426.7 1139.7 429.9 M1196.8 351.8 Q1212.8 358.4 1231.4 372.8 M956.3 576.9 Q966.9 597.7 972.2 604.8 M864.6 421.4 Q859.6 426.6 863.3 446.7 M574.1 658.8 Q578.2 672.7 587.4 689.1 M1196.8 631.4 Q1219.0 628.3 1235.3 634.8 M749.0 402.3 Q754.4 414.1 750.3 418.2 M462.5 199.7 Q459.9 206.3 457.1 222.3 M615.4 394.6 Q615.6 416.0 600.7 443.5 M1062.2 140.9 Q1088.3 143.4 1104.2 154.5 M318.9 569.7 Q287.9 588.5 265.8 599.0 M687.8 555.1 Q699.8 587.8 718.4 606.1 M493.0 535.7 Q513.5 550.2 534.2 574.8 M1208.8 430.7 Q1186.4 436.4 1172.9 444.8 M1270.0 646.0 Q1239.4 660.1 1203.5 659.8 M425.2 335.8 Q413.6 349.4 413.3 366.4 M843.3 333.9 Q854.7 357.3 875.2 365.6 M1079.9 382.1 Q1082.8 383.5 1097.2 399.3 M1048.0 416.1 Q1050.9 426.7 1067.9 440.8 M956.3 570.2 Q945.4 585.2 921.7 588.0 M188.7 581.7 Q190.4 616.1 184.7 634.6 M373.4 465.3 Q373.0 467.5 358.8 475.1 M1172.9 255.5 Q1142.0 284.0 1121.1 298.5 M184.7 634.6 Q209.2 653.0 225.9 686.4 M802.1 392.2 Q778.2 395.3 749.0 402.3 M1081.2 631.4 Q1067.2 654.9 1057.3 683.7 M422.6 388.7 Q426.6 394.8 441.2 416.9 M264.5 517.1 Q257.6 542.8 257.8 573.2 M1196.8 631.4 Q1196.8 634.4 1182.2 649.5 M555.5 472.4 Q558.9 472.8 547.5 482.5 M767.6 518.4 Q763.3 528.8 763.6 529.0 M615.4 394.6 Q625.2 406.3 624.6 420.1 M1214.1 609.6 Q1217.5 621.8 1235.3 634.8 M555.5 472.4 Q562.1 503.7 572.8 521.6 M869.8 120.3 Q883.9 132.6 907.9 149.3 M530.2 404.7 Q519.3 403.5 495.7 417.4 M494.4 636.2 Q502.9 650.7 514.3 655.3 M701.8 347.2 Q726.3 314.6 742.3 296.7 M843.3 333.9 Q804.7 332.0 780.9 344.0 M718.4 595.0 Q725.1 596.7 718.4 606.1 M1079.9 382.1 Q1067.9 405.5 1048.0 416.1 M1208.8 493.2 Q1231.5 511.1 1259.3 536.2 M475.7 167.8 Q476.4 185.6 462.5 199.7 M624.6 420.1 Q616.8 429.9 616.6 432.8 M1081.2 631.4 Q1097.5 643.8 1119.7 663.3 M264.5 517.1 Q271.8 534.5 295.0 543.7 M1017.8 138.9 Q1046.7 142.0 1062.2 140.9 M257.8 573.2 Q230.3 569.8 188.7 581.7 M478.4 256.0 Q478.1 276.6 486.4 298.0" fill="none" stroke="#f28a5c" stroke-width="1.3" opacity="0.85"/><path d="M1233.8 661.0 L1241.7 682.1 M719.6 370.9 L699.7 375.5 M1083.3 525.2 L1050.9 545.4 M892.7 266.5 L906.6 288.3 M1063.5 109.8 L1094.1 131.6 M992.7 341.6 L1013.1 360.0 M905.4 484.7 L877.0 513.4 M948.5 136.3 L927.6 147.7 M853.3 295.0 L839.0 310.3 M541.5 214.6 L578.3 233.8 M864.4 265.6 L878.8 308.0 M795.1 205.8 L766.6 225.4 M1267.2 124.5 L1270.3 163.9 M1120.4 636.1 L1144.0 639.1 M1207.8 294.5 L1181.9 306.1 M553.7 550.0 L535.8 553.1 M881.8 450.6 L902.0 467.0 M936.0 188.2 L960.8 189.1 M962.0 176.6 L973.8 194.2 M1076.2 405.3 L1093.9 408.8 M685.8 406.6 L678.3 422.7 M459.8 498.1 L466.3 520.7 M600.2 660.5 L618.0 687.1 M696.5 616.2 L698.9 635.9 M386.9 452.0 L398.8 479.7 M442.4 238.5 L439.5 281.1 M771.2 93.6 L745.2 99.7 M1182.5 450.8 L1165.6 461.2 M1067.0 199.9 L1078.9 238.5 M1109.3 175.3 L1130.2 192.4 M805.5 301.7 L826.2 310.1 M1007.5 625.3 L1039.1 629.4 M1039.3 84.0 L1023.1 93.0 M885.1 406.5 L875.7 428.8 M710.0 427.1 L718.0 460.9 M736.1 336.2 L769.5 338.6 M747.3 173.1 L748.8 191.3 M425.4 331.3 L452.5 339.3 M797.9 85.7 L790.7 101.6 M1015.9 549.9 L1015.3 566.5 M791.8 298.1 L773.0 301.0 M1194.1 164.0 L1160.3 190.5 M1175.0 233.2 L1158.9 243.8 M790.2 639.5 L808.3 653.5 M793.9 261.0 L814.2 263.4 M457.4 649.9 L435.0 685.3 M464.7 554.5 L493.6 565.4 M921.0 286.7 L891.9 299.0 M866.1 616.0 L908.5 630.5 M914.7 308.4 L896.2 322.0 M731.7 171.4 L720.3 183.2 M1100.1 219.8 L1081.3 260.1 M871.8 478.1 L880.2 490.7 M800.4 624.2 L820.3 633.0 M937.4 74.0 L963.1 74.3 M875.0 188.6 L863.9 215.7 M431.5 650.1 L445.6 663.5 M393.5 462.1 L358.1 477.2 M692.3 226.5 L726.6 227.7 M848.8 280.7 L836.3 306.1 M1214.7 522.1 L1244.6 551.8 M357.0 550.7 L388.5 551.9 M1218.3 149.6 L1245.3 169.1 M794.8 464.2 L777.9 475.4 M1064.2 510.7 L1104.5 511.5 M1027.3 353.1 L1007.6 373.8 M627.5 532.3 L604.2 565.3 M994.6 227.6 L989.9 255.3 M1069.5 389.6 L1092.6 415.0 M1242.0 196.7 L1227.6 202.4 M554.1 208.7 L524.1 240.0 M1028.2 265.9 L1005.1 275.1 M533.4 631.8 L519.1 664.6 M980.9 600.2 L988.1 636.3 M856.7 253.9 L883.1 274.7 M375.9 633.8 L390.1 640.7 M404.1 645.2 L413.1 662.3 M980.3 524.2 L1012.3 530.9 M654.7 575.1 L619.5 597.5 M364.4 606.7 L322.6 618.2 M1127.4 571.6 L1111.1 607.8 M916.4 241.0 L933.4 246.6 M1039.2 189.1 L1054.1 212.5 M1130.9 449.5 L1158.2 452.2 M726.0 547.0 L742.7 579.0 M825.0 196.4 L808.9 203.9 M1100.1 167.3 L1121.2 167.4 M1043.9 676.1 L1073.6 676.5 M779.7 562.0 L804.7 578.3 M638.9 584.1 L668.4 615.7 M407.3 461.0 L444.7 470.7 M980.4 555.8 L970.4 579.4 M1167.1 75.9 L1185.4 89.7 M1179.6 375.7 L1195.0 414.3 M528.0 350.4 L524.2 387.8 M1034.9 467.2 L1046.3 489.2 M451.6 591.2 L433.4 623.7 M465.5 336.4 L441.0 357.6 M423.0 351.1 L402.3 358.9 M487.0 249.9 L463.0 282.3 M809.6 161.4 L820.3 179.1 M1015.7 334.0 L1043.6 353.7 M689.4 558.3 L672.3 583.0 M917.2 351.9 L947.1 366.1 M695.0 526.8 L668.3 534.7 M860.2 531.9 L865.6 553.1 M1004.9 614.4 L977.6 637.9 M1132.0 488.1 L1119.7 514.0 M605.5 455.8 L631.8 464.2 M1063.6 509.3 L1054.7 529.9 M713.4 346.8 L703.2 372.1 M959.0 646.0 L988.1 664.9 M1059.5 304.9 L1060.9 349.1 M1218.0 387.1 L1248.6 397.2 M828.1 511.9 L826.7 546.0 M1109.1 388.7 L1121.2 430.4 M505.0 491.1 L517.6 526.9 M710.5 499.9 L720.7 520.4 M519.0 527.1 L488.8 532.9 M513.7 564.9 L520.8 585.1 M426.2 549.3 L398.1 568.4 M757.9 414.1 L791.2 442.7 M644.7 462.4 L611.4 483.7 M756.9 245.4 L754.0 264.0 M1113.7 283.5 L1093.2 293.9 M302.6 514.7 L316.8 532.0 M943.4 288.3 L903.8 297.4 M355.7 581.6 L318.8 592.8 M437.0 583.7 L430.8 597.9 M311.2 659.6 L300.6 679.5 M463.9 621.4 L451.0 657.6 M952.4 623.2 L920.8 648.0 M492.6 496.5 L489.0 533.5 M728.1 616.1 L724.1 638.7 M755.9 151.0 L756.7 180.9 M826.6 603.6 L866.8 604.4 M756.7 414.4 L736.8 449.3 M921.8 460.8 L954.9 463.7 M966.2 646.8 L988.8 685.1 M798.4 365.3 L783.2 370.4 M1000.9 453.9 L1020.8 489.6 M657.4 359.0 L654.3 397.0 M505.7 334.2 L513.3 364.9 M1106.9 244.5 L1083.6 258.5 M791.7 231.2 L790.8 275.4 M938.8 558.9 L951.3 580.1 M592.0 429.5 L576.2 464.6 M339.1 515.3 L309.7 526.3 M1199.3 443.5 L1180.9 477.5 M1188.0 445.4 L1175.9 477.0 M979.7 435.7 L968.2 453.7 M951.0 348.5 L937.7 360.7 M940.0 292.4 L907.2 312.8 M848.6 222.5 L864.7 245.0 M1090.9 422.5 L1063.4 429.6 M1257.2 359.5 L1262.2 376.9 M929.0 193.7 L942.8 200.8 M304.7 490.8 L345.5 507.2 M1002.1 212.6 L988.3 227.9 M348.9 547.6 L323.7 579.5 M1012.2 113.1 L997.9 146.5 M749.5 647.4 L780.2 678.8 M1000.0 67.2 L1034.5 68.8 M1097.7 110.2 L1118.4 140.8 M462.0 602.4 L462.7 619.2 M658.7 422.2 L665.5 456.9 M914.6 323.3 L928.1 359.4 M1222.2 554.3 L1217.3 577.6 M624.1 441.7 L584.2 444.5 M886.7 254.4 L896.0 295.0 M667.6 491.4 L654.5 531.2 M1088.1 238.5 L1111.0 238.6 M712.4 429.6 L677.5 452.3 M341.3 584.9 L307.2 607.8 M858.2 232.5 L823.2 250.2 M968.2 635.7 L976.3 651.2 M840.4 562.4 L870.7 584.4 M1209.4 207.4 L1197.7 240.8 M754.2 190.1 L780.3 217.1 M1072.7 349.6 L1110.4 360.3 M1053.6 206.7 L1043.3 247.3 M1163.9 388.8 L1166.3 421.4 M654.1 415.6 L663.3 444.7 M403.6 458.6 L388.1 470.8 M882.9 277.3 L881.9 292.9 M853.6 224.8 L832.2 242.6 M1223.8 543.4 L1186.8 567.0 M747.3 656.7 L731.0 661.5 M883.7 310.4 L924.4 326.5 M551.0 415.6 L532.3 455.1 M953.6 307.7 L956.8 327.2 M549.7 281.8 L509.5 294.4 M1117.1 89.6 L1088.7 112.2 M931.2 680.8 L950.2 684.2 M1036.8 651.8 L1024.2 672.2 M877.3 537.5 L900.6 545.5 M1000.0 182.9 L1042.6 187.8 M515.3 648.4 L477.2 665.3 M436.4 341.8 L477.3 354.6 M1122.0 455.9 L1125.8 480.8 M1103.3 360.8 L1095.8 378.6 M441.2 608.6 L459.6 628.9" fill="none" stroke="#d4949e" stroke-width="1.1" opacity="0.9"/><path d="M451.9 216.2 L454.7 209.0 L457.9 200.4 M1173.6 474.4 L1175.9 482.9 L1180.2 489.7 L1190.7 501.6 L1192.7 516.7 M1174.7 77.4 L1168.6 62.8 L1157.0 54.9 L1150.1 52.0 L1136.1 54.8 M813.9 160.8 L805.8 160.1 L798.5 158.8 L785.1 161.7 L777.2 161.3 M894.0 362.1 L896.4 373.9 L895.7 388.0 L894.6 396.0 L899.4 408.4 M698.3 509.1 L705.4 515.2 L711.6 528.5 L714.3 534.0 L713.8 544.8 M1151.1 213.1 L1151.1 222.7 L1155.0 231.7 L1156.7 237.4 L1159.5 247.5 M803.3 118.5 L805.5 104.0 L804.8 90.9 L802.1 77.7 L792.3 66.7 M1231.2 361.6 L1219.9 360.3 L1205.8 367.1 L1200.3 372.7 L1197.7 380.8 M1097.5 59.5 L1102.8 65.5 L1114.4 68.6 L1124.9 72.6 L1130.7 76.6 M1148.7 506.1 L1159.4 504.3 L1168.1 502.8 L1176.3 497.0 L1182.1 486.6 M1140.4 135.7 L1134.9 130.5 L1128.5 116.5 L1123.1 107.8 L1121.4 96.7 M686.1 651.8 L685.9 643.4 L683.6 633.3 L688.5 620.2 L699.2 610.8 M1127.3 74.8 L1115.2 65.4 L1105.6 61.8 L1097.2 57.1 L1091.5 53.6 M722.6 368.1 L737.6 363.4 L753.0 363.9 L766.8 366.6 L778.6 375.6 M333.5 457.0 L330.9 465.3 L325.4 479.6 L321.3 487.0 L316.0 495.9 M1228.0 226.9 L1224.4 233.1 L1215.2 245.6 L1209.9 252.5 L1203.3 261.8 M1119.6 436.5 L1113.1 431.8 L1106.3 423.7 L1099.0 413.9 L1093.3 406.8 M800.2 289.1 L790.6 289.5 L782.9 286.3 L773.1 281.6 L757.5 278.5 M588.4 541.9 L601.5 548.6 L607.6 551.2 L617.6 554.0 L623.6 557.7 M519.8 663.5 L515.4 655.3 L507.5 645.2 L500.3 632.7 L498.8 621.6 M1021.0 523.1 L1021.5 509.3 L1025.7 494.7 L1023.2 480.2 L1013.8 470.3 M871.8 363.6 L881.8 362.1 L896.3 364.9 L905.6 368.0 L915.8 370.8 M1005.7 230.4 L997.7 236.1 L988.4 246.4 L978.3 250.8 L971.4 254.5 M861.6 418.0 L866.2 426.1 L867.6 440.4 L864.1 447.6 L858.8 461.8 M851.4 363.3 L862.6 361.3 L872.8 365.9 L884.4 371.5 L893.5 374.4 M880.4 268.2 L891.6 266.9 L899.7 261.4 L908.4 253.8 L920.4 245.1 M1241.3 356.4 L1225.8 359.9 L1215.4 364.5 L1207.7 364.8 L1192.4 368.7 M1106.2 373.2 L1111.3 385.1 L1111.6 401.0 L1107.1 410.2 L1106.8 419.0 M799.3 368.2 L807.9 377.0 L813.6 384.6 L814.3 397.0 L820.0 405.3 M1068.7 239.4 L1061.3 234.3 L1055.0 224.2 L1052.2 216.7 L1048.2 205.9 M559.6 460.4 L551.4 452.0 L545.8 447.5 L532.7 443.8 L525.9 445.1 M466.4 379.6 L474.3 368.0 L474.8 361.9 L478.3 353.3 L484.1 345.8 M465.3 213.3 L470.6 223.9 L476.9 232.3 L481.5 236.9 L485.1 248.2 M1236.6 325.8 L1230.8 322.9 L1222.6 310.9 L1211.6 300.7 L1207.7 292.6 M888.1 664.0 L880.7 659.9 L868.5 655.0 L859.4 654.6 L849.9 649.4 M1073.7 198.2 L1078.5 204.5 L1079.3 213.3 L1079.3 220.5 L1079.0 230.3 M420.3 576.8 L417.8 584.3 L417.2 592.6 L423.1 603.8 M988.9 100.2 L985.3 106.5 L978.9 119.4 L973.4 124.6 L965.4 135.1 M667.8 663.0 L664.8 673.6 L665.3 684.1 M554.5 624.8 L546.7 621.5 L539.6 617.5 L535.5 611.5 L529.2 602.0 M563.9 541.6 L553.9 547.6 L546.7 554.4 L544.3 561.8 L538.2 568.7 M946.8 110.8 L936.1 108.4 L929.5 108.5 L921.4 110.5 L911.3 119.0 M575.6 302.2 L590.0 298.6 L597.2 300.0 L603.4 299.5 L616.0 301.3 M943.2 494.5 L939.5 503.3 L935.3 509.9 L933.8 524.9 L929.0 537.1 M595.8 287.5 L608.2 287.7 L621.6 282.6 L634.3 278.9 M967.9 266.9 L980.5 272.3 L986.9 273.3 L997.0 279.9 L1005.5 280.1 M408.5 554.4 L405.2 567.5 L408.4 580.1 L413.4 592.6 L413.2 601.4 M387.8 655.1 L374.9 654.6 L361.3 650.1 L352.0 645.2 L339.0 646.0 M718.1 372.7 L726.6 362.1 L728.2 349.1 L732.2 341.6 L740.4 328.1 M922.2 393.6 L927.1 401.8 L931.8 408.3 L937.4 413.0 L944.8 423.4 M803.0 329.3 L810.5 324.3 L817.9 323.4 L827.2 323.0 L838.1 326.8 M1042.3 150.0 L1038.1 140.2 L1036.8 126.0 L1032.2 118.4 L1026.9 112.3 M492.4 496.1 L485.9 502.6 L479.4 509.7 L477.1 516.1 L480.9 531.5 M1032.4 94.6 L1036.6 83.7 L1035.6 72.9 L1034.2 65.1 L1033.4 59.1 M1197.5 458.9 L1194.4 446.8 L1190.1 439.5 L1184.9 436.0 L1176.2 424.6 M922.8 589.7 L931.8 579.2 L943.9 573.3 L950.0 568.4 L958.8 565.9 M659.7 398.2 L652.0 401.7 L645.5 411.3 L635.8 421.7 L623.1 429.9 M1222.3 361.3 L1214.0 365.0 L1207.6 367.1 L1200.0 367.8 L1184.5 370.3 M729.0 164.0 L719.0 153.7 L714.3 140.6 L710.7 132.5 L708.0 121.7 M728.2 473.0 L734.4 468.6 L741.3 460.7 L748.1 454.1 L750.9 447.9 M1248.0 630.7 L1263.0 626.4 M358.6 479.7 L348.0 474.7 L342.0 465.7 L338.4 457.4 L330.1 445.1 M962.4 330.8 L969.7 337.2 L976.5 344.7 L984.1 353.5 L989.4 358.3 M476.2 618.5 L461.7 620.9 L455.5 623.9 L447.7 627.4 L437.3 632.3 M521.1 412.3 L530.0 420.1 L539.8 422.4 L549.8 419.4 L561.2 421.1 M997.5 532.0 L1000.9 544.8 L1010.5 555.3 L1016.4 560.3 L1020.0 571.3 M1056.4 128.9 L1053.4 121.1 L1050.3 115.8 L1047.1 108.3 L1039.2 97.9 M715.8 617.6 L711.6 606.7 L713.6 592.2 L710.2 579.2 L704.2 566.9 M964.2 576.7 L975.1 584.4 L980.4 596.5 L990.3 603.4 L1001.7 604.9 M1083.7 113.4 L1092.0 111.2 L1100.5 105.1 L1112.0 102.5 L1116.8 98.6 M407.8 560.5 L410.7 568.8 L411.9 578.6 L419.5 591.2 L425.7 602.5 M1088.8 656.7 L1096.3 655.9 L1110.9 654.5 L1117.1 656.1 L1131.1 654.4 M963.2 295.2 L951.0 302.9 L939.6 312.3 L933.9 315.8 L928.0 321.5 M1172.5 423.0 L1182.1 421.8 L1193.7 419.9 L1202.8 417.2 L1210.2 408.0 M748.4 681.2 L761.0 679.4 L769.0 675.9 L776.9 672.4 L787.5 668.8 M1234.0 684.9 L1247.1 688.8 M917.9 452.5 L911.9 465.1 L899.9 474.7 L891.8 478.7 L878.5 480.6 M796.7 452.9 L790.3 460.6 L788.7 469.9 L789.5 485.7 L790.2 495.4 M307.1 606.1 L296.1 610.3 L289.8 614.6 L285.8 622.7 M838.0 649.3 L827.6 655.0 L823.4 661.5 L813.6 674.0 L807.1 686.1 M718.0 604.4 L731.8 610.3 L740.3 611.5 L747.2 608.3 L757.1 599.8 M513.1 299.7 L515.8 314.1 L515.9 322.1 L511.7 337.1 L509.1 343.4 M1090.0 609.1 L1089.0 616.9 L1086.3 631.4 L1081.1 645.7 L1081.1 655.0 M1031.3 461.8 L1022.6 465.3 L1016.4 473.3 L1015.0 485.5 L1015.9 496.4 M883.5 207.1 L873.0 218.1 L861.3 228.8 L857.7 240.4 L852.6 248.2 M439.2 538.7 L445.3 546.9 L451.8 556.9 L458.0 567.8 L461.6 576.4 M1023.3 207.6 L1024.3 193.9 L1022.2 180.3 L1026.5 170.7 L1028.2 159.6 M1218.4 125.7 L1230.9 126.1 L1239.9 129.4 L1244.8 136.1 L1246.9 142.7 M841.9 158.2 L848.3 154.3 L856.4 143.6 L863.3 140.5 L870.9 129.0 M536.8 678.5 L527.4 677.0 L518.2 671.8 L503.9 667.3 L490.7 669.5 M363.9 459.5 L357.4 460.7 L347.3 461.8 L333.1 455.7 L326.1 451.4 M545.9 210.5 L539.9 215.9 L528.6 221.1 L516.1 231.0 L509.9 240.9 M1148.4 213.7 L1151.8 205.6 L1153.9 194.9 L1158.6 188.9 L1167.9 181.3 M742.2 416.5 L749.1 403.4 M1142.6 158.5 L1151.3 156.2 L1156.1 150.9 L1162.0 149.3 L1169.3 151.1 M1018.4 103.4 L1020.3 110.0 L1027.4 123.5 L1030.7 137.9 L1028.5 143.9 M529.0 554.9 L520.1 548.3 L510.3 545.1 L504.2 546.1 L495.8 542.3 M1157.5 118.3 L1148.5 123.4 L1140.6 133.5 L1137.3 146.4 L1135.6 153.3 M1196.6 267.1 L1191.7 281.1 L1186.6 288.2 L1184.6 296.6 L1186.4 302.8 M796.5 305.3 L790.5 304.1 L779.1 299.0 L768.8 293.9 L756.7 283.7 M1153.1 506.5 L1146.4 514.2 L1136.9 517.0 L1127.7 521.1 L1117.1 533.1 M1204.1 205.5 L1196.9 201.1 L1189.8 199.8 L1178.4 192.0 L1175.4 186.3 M977.5 250.8 L972.4 243.3 L972.2 237.2 L976.1 223.2 L979.4 211.8 M1270.9 192.4 L1266.5 183.6 L1264.4 173.9 L1262.3 162.0 L1262.6 152.8 M913.8 393.0 L914.1 401.6 L909.4 411.3 L901.9 419.7 L896.7 426.0 M438.7 642.8 L427.7 640.4 L420.7 635.8 L406.7 633.1 L394.4 631.3 M1107.6 621.1 L1109.5 611.5 L1117.4 599.7 L1118.4 592.2 L1117.3 585.3 M648.1 562.1 L641.2 561.6 L625.3 562.3 L615.0 560.4 L601.2 558.1 M1040.6 137.4 L1034.3 128.2 L1026.6 122.2 L1017.8 117.8 L1009.9 118.7 M856.9 77.5 L858.5 86.1 L861.8 93.9 L861.7 100.8 L859.3 115.2 M496.8 315.0 L500.7 306.1 L499.2 295.8 L495.4 283.3 L490.1 274.6 M932.6 567.0 L926.9 577.3 L920.2 581.5 L907.1 581.4 L894.6 583.2 M1037.9 286.6 L1023.1 284.2 L1017.5 281.4 L1008.6 275.6 L996.2 268.3 M704.9 347.8 L712.8 340.3 L723.3 330.6 L734.8 323.7 L739.8 319.8 M963.5 400.0 L966.6 393.5 L967.4 386.8 L970.7 380.6 L970.6 367.1 M850.9 75.8 L848.9 65.1 L840.5 55.3 M1265.0 218.5 L1266.2 227.0 L1263.0 238.1 L1260.0 247.8 L1262.1 256.6 M1146.0 561.3 L1148.9 553.8 L1147.1 542.6 L1143.9 532.5 L1140.1 521.2 M657.0 560.9 L654.8 572.3 L657.9 580.9 L660.9 590.5 L663.0 599.5 M567.0 557.5 L560.1 569.7 L553.9 578.2 L544.4 582.5 L537.8 582.3 M723.3 455.5 L728.3 460.1 L733.4 466.0 L735.7 477.3 L734.0 488.2 M957.7 478.7 L958.6 493.1 L965.7 506.5 L971.0 511.1 L984.4 514.5 M1228.0 309.5 L1216.6 299.8 L1212.1 293.7 L1200.2 288.7 L1186.0 290.8 M868.1 247.2 L853.0 247.7 L839.0 251.2 L828.0 259.8 L818.1 260.7 M925.4 185.2 L915.0 187.3 L904.7 186.6 L897.9 184.5 L892.2 180.0 M1201.2 687.5 L1209.5 684.4 L1221.2 677.6 L1234.3 669.8 L1240.0 660.5 M1143.3 428.6 L1136.1 430.3 L1123.1 437.6 L1114.8 438.4 L1109.0 435.9 M884.4 668.8 L873.1 674.2 L867.9 682.0 L863.7 689.3 M1068.8 233.9 L1074.9 237.2 L1086.6 244.7 L1094.8 251.4 L1105.9 252.8 M394.9 460.4 L400.6 468.0 L409.7 476.8 L416.9 479.6 L422.7 486.9 M1122.1 607.7 L1116.1 611.3 L1109.0 612.0 L1097.7 613.1 L1088.6 618.7 M460.1 388.1 L452.2 389.0 L444.3 390.8 L437.8 396.1 L427.1 398.7 M856.7 487.8 L855.4 495.3 L856.2 501.5 L858.8 512.4 L865.9 525.5 M382.3 416.0 L382.1 429.9 L380.4 436.3 L380.8 448.2 L377.5 453.7 M903.4 489.7 L906.4 475.9 L909.0 460.9 L902.8 446.8 L897.8 438.1 M1016.1 481.2 L1021.5 486.3 L1029.0 489.5 L1044.5 492.7 L1054.2 502.6 M768.2 363.3 L776.6 352.7 L782.6 347.4 L794.6 339.4 L801.4 337.7 M1000.2 267.0 L1000.1 279.7 L997.9 286.7 L988.1 298.5 L975.6 303.6 M1112.5 561.4 L1099.9 554.7 L1090.0 543.8 L1077.0 535.1 L1064.5 526.1 M413.1 669.5 L412.2 655.1 L409.2 647.7 L405.7 640.2 L399.2 626.5 M968.9 501.8 L955.7 506.4 L940.4 508.2 L930.7 505.5 L918.5 508.3 M1116.2 260.7 L1108.7 249.0 L1098.6 244.7 L1091.6 246.0 L1081.7 243.9 M890.2 337.4 L888.4 346.7 L881.5 356.7 L879.1 363.2 L878.0 376.2 M731.4 469.6 L730.2 456.9 L721.6 445.5 L714.2 441.0 L709.8 432.4 M518.8 618.4 L514.9 609.3 L508.8 595.0 L502.6 580.3 L492.6 570.1 M458.3 382.7 L472.6 376.8 L485.4 370.8 L492.4 364.4 L496.4 353.6 M1141.6 374.0 L1127.1 377.9 L1120.4 378.3 L1110.0 377.4 L1102.2 371.6 M945.3 450.8 L936.0 459.5 L925.4 462.4 L911.0 468.9 L902.8 480.7 M967.1 402.3 L952.2 402.7 L939.1 399.4 L930.3 402.2 L918.9 412.8 M1170.0 133.9 L1164.8 130.1 L1153.1 123.5 L1146.3 117.9 L1141.4 110.4 M1254.7 461.7 L1259.9 453.4 L1271.6 447.6 M458.0 413.9 L465.0 407.5 L469.3 397.2 L475.0 392.1 L482.0 388.9 M590.5 288.9 L597.9 291.6 L613.2 293.4 L622.2 291.2 L628.9 289.0 M554.0 296.1 L545.4 297.5 L532.3 305.0 L520.3 312.8 L507.6 318.4 M1038.9 345.6 L1027.5 338.3 L1018.4 335.4 L1010.5 327.3 L1000.1 320.8 M553.5 541.4 L562.8 548.5 L576.5 555.5 L584.7 557.1 L595.6 553.5 M1035.6 480.7 L1028.6 482.0 L1017.2 487.0 L1005.0 485.1 L992.3 480.0 M685.0 651.2 L682.7 641.6 L683.9 632.2 L680.3 617.9 L678.0 606.9 M953.3 626.0 L958.7 630.0 L968.1 635.7 L975.3 646.1 L980.3 654.8 M860.0 218.0 L871.6 209.5 L877.9 198.5 L886.0 191.1 L900.5 187.1 M1025.2 573.6 L1023.9 566.4 L1024.7 553.4 L1026.4 544.9 L1022.6 533.4 M1104.5 217.5 L1108.2 223.3 L1113.6 238.1 L1113.5 247.7 L1111.8 254.2 M1118.5 251.3 L1125.7 252.6 L1132.3 252.0 L1143.7 250.2 L1150.0 251.5 M1107.5 111.9 L1107.6 121.3 L1110.0 132.7 L1117.2 144.6 L1128.5 153.6 M1089.3 389.1 L1094.8 392.2 L1103.6 397.4 L1115.9 397.5 L1127.3 400.7 M690.5 372.9 L676.2 369.5 L666.7 359.2 M766.4 126.9 L753.4 127.8 L744.0 129.0 L735.2 133.8 L729.4 139.3 M1018.3 375.5 L1008.8 384.4 L1004.9 392.2 L998.4 403.4 L986.4 409.5 M1225.5 638.0 L1226.1 631.4 L1224.6 625.4 L1226.8 612.4 L1229.6 604.3 M646.7 624.3 L648.7 617.6 L647.4 610.2 L649.0 599.6 L659.1 588.4 M1075.7 349.6 L1075.7 342.5 L1076.6 331.4 L1074.4 323.2 L1063.1 313.2 M993.2 654.5 L1006.2 651.8 L1019.6 647.2 L1026.9 647.7 L1034.0 643.7 M871.3 286.3 L883.8 292.4 L889.7 294.9 L896.9 303.6 L905.5 306.9 M909.6 615.5 L901.6 614.9 L886.9 618.4 L880.4 621.0 L873.4 623.0 M495.1 336.7 L485.1 328.2 L479.7 324.3 L475.6 319.2 L469.1 311.6 M956.7 503.9 L955.3 516.8 L954.7 524.2 L948.2 534.2 L947.8 542.6 M1263.2 188.7 L1249.7 193.3 L1236.5 195.6 L1231.3 200.2 L1217.4 202.3 M534.7 644.9 L534.4 660.2 L531.7 675.2 L532.5 682.7 M401.3 672.5 L393.1 661.2 L383.5 655.4 L369.7 654.5 L356.6 646.8 M842.6 573.9 L830.8 572.0 L824.9 568.6 L813.4 568.8 L803.8 571.4 M307.4 524.2 L319.5 531.6 L325.9 535.0 L332.1 540.1 L338.0 544.0 M1253.0 395.0 L1250.9 408.1 L1243.0 420.3 L1242.1 429.9 L1244.0 443.4 M444.3 434.2 L450.2 435.3 L457.0 433.1 L468.9 432.0 L479.5 431.3 M697.6 437.2 L695.8 424.0 L699.1 409.2 L706.7 398.5 L707.5 385.7 M1129.6 320.0 L1135.9 305.9 L1140.4 293.7 L1140.9 284.7 L1139.7 275.5 M1257.3 465.1 L1271.6 463.5 M525.2 616.1 L535.7 607.2 L549.6 601.8 L560.9 601.6 L573.5 594.8 M606.1 447.5 L595.1 458.7 L591.0 469.2 L585.0 478.9 L576.1 483.6 M1191.9 488.4 L1198.1 483.2 L1206.8 470.9 L1207.1 462.3 L1211.7 447.1 M472.0 324.7 L469.8 311.4 L470.9 303.0 L470.0 296.8 L470.6 288.7 M553.3 666.8 L546.6 656.2 L541.0 644.5 L536.9 639.3 L531.2 637.1 M410.2 360.9 L418.9 361.2 L426.2 363.9 L435.1 362.8 L447.7 359.8 M734.2 513.4 L738.4 521.9 L738.8 528.2 L736.0 536.0 L726.3 546.1 M954.6 220.5 L969.0 215.9 L978.4 207.6 L988.7 200.3 L992.7 194.0 M394.8 678.8 L384.8 684.9 M1005.3 129.9 L1004.7 120.3 L1004.5 113.2 L999.9 100.0 L994.5 91.8 M1046.4 185.6 L1052.7 193.2 L1062.0 201.4 L1073.4 210.7 L1085.9 212.5 M1116.4 192.6 L1123.5 193.4 L1136.6 194.2 L1143.1 191.3 L1150.1 187.9 M525.2 326.2 L534.6 328.3 L549.7 331.2 L556.2 332.9 M849.4 605.6 L856.3 607.0 L864.7 614.5 L871.8 617.6 L877.2 623.7 M1201.9 339.6 L1195.7 331.1 L1189.7 325.8 L1183.9 318.1 L1169.7 311.0 M770.0 157.0 L780.8 159.8 L791.0 156.4 L802.3 156.1 L812.7 152.3 M890.4 463.2 L894.9 478.0 L895.0 492.6 L897.5 507.4 L901.8 514.5 M883.6 626.0 L889.9 627.1 L897.2 627.9 L910.2 624.3 L925.4 621.8 M692.3 481.4 L699.1 486.3 L708.4 492.4 L713.1 502.3 L711.3 514.4 M511.2 582.0 L508.1 592.1 L508.6 607.8 L511.0 617.5 L516.3 629.0 M458.2 578.2 L466.7 579.3 L478.3 580.2 L485.3 582.6 L492.5 582.7 M1237.2 136.9 L1244.7 146.1 L1246.1 152.5 L1250.0 159.1 L1254.5 168.7 M699.1 617.4 L697.2 602.0 L691.2 587.8 L688.0 582.1 L687.9 575.1 M582.0 668.5 L589.0 659.6 L601.4 652.9 L612.0 649.6 L618.1 643.7 M942.3 421.1 L953.5 410.2 L956.4 404.1 L965.6 396.9 L972.1 385.7 M657.5 380.5 L646.4 372.9 M956.0 559.7 L968.8 560.1 L980.7 563.6 L996.2 562.0 L1004.3 564.0 M720.3 662.6 L726.1 677.2 L725.2 685.4 M947.4 538.5 L954.7 542.2 L960.9 543.3 L970.7 540.9 L977.1 538.6 M868.4 652.5 L856.0 648.6 L848.4 646.8 L842.4 645.5 L835.4 642.3 M660.8 665.6 L666.9 654.8 L675.0 644.5 L682.5 641.9 L691.5 641.7 M549.6 574.0 L542.4 561.2 L539.2 553.9 L529.7 547.7 L523.9 541.1 M469.1 492.3 L477.3 489.8 L493.2 489.0 L499.0 484.9 L514.6 483.3 M445.0 258.0 L434.9 258.7 M909.1 492.8 L903.5 504.9 L900.9 515.5 L902.9 530.6 L903.3 537.1 M450.2 490.2 L442.8 493.9 L428.9 495.4 L419.0 502.0 L411.5 512.7 M1084.7 554.3 L1091.9 564.7 L1095.6 571.1 L1104.9 578.5 L1117.0 581.0 M713.3 386.5 L704.5 376.6 L696.8 372.3 L686.7 364.1 L676.5 353.2 M499.7 242.2 L494.1 237.2 L481.5 231.8 L472.3 222.3 L469.2 208.7 M1003.9 76.2 L997.5 74.9 L990.2 73.4 L979.1 63.5 L972.9 58.5 M416.7 369.4 L403.6 369.8 M677.7 354.3 L676.0 362.3 L676.0 373.1 L672.5 386.3 L671.4 396.8 M1205.3 647.0 L1195.1 644.2 L1187.2 640.5 L1171.5 642.4 L1164.7 639.7 M754.7 442.6 L757.4 455.8 L756.2 466.1 L759.8 475.3 L771.7 485.5 M1049.5 127.8 L1057.0 129.0 L1071.1 131.7 L1078.7 130.1 L1088.9 131.3 M537.0 671.6 L549.1 677.4 L558.2 689.4 M889.6 227.7 L876.2 227.1 L868.9 230.2 L861.9 229.2 L853.8 224.5 M468.7 524.1 L466.6 534.1 L458.5 546.2 L454.7 551.0 L444.6 557.6 M1177.8 658.8 L1166.7 667.6 L1161.1 675.5 L1156.7 683.9 M521.7 631.2 L508.0 637.0 L499.6 637.8 L486.7 632.1 L479.5 621.0 M1036.7 568.5 L1034.7 578.1 L1030.5 584.0 L1024.7 591.4 L1016.5 596.2 M1123.6 591.1 L1129.3 576.8 L1137.2 566.8 L1142.1 562.5 L1153.1 559.4 M744.8 260.6 L752.4 248.0 M1077.4 187.6 L1090.8 186.6 L1100.4 182.1 L1112.4 174.7 L1121.4 174.6 M917.1 621.6 L904.4 617.7 L889.7 616.7 L882.7 615.6 L868.9 611.9 M806.1 354.6 L793.5 355.5 L784.7 359.4 L771.7 368.0 L764.8 370.5 M876.7 321.0 L874.7 314.4 L871.1 300.7 L871.9 291.1 L868.6 278.1 M1082.5 182.4 L1092.7 180.9 L1105.3 177.2 L1113.1 179.0 L1122.4 178.9 M1014.6 161.4 L1002.5 157.7 L987.1 159.8 L976.7 154.6 L971.4 148.9 M1188.3 398.4 L1193.0 390.0 L1199.8 385.7 L1204.5 375.7 L1216.4 366.6 M1232.0 372.0 L1239.0 369.5 L1252.8 366.8 L1264.3 363.4 L1271.7 358.6 M710.2 373.6 L705.5 377.4 L697.1 387.6 L690.1 392.2 L683.0 400.8 M471.2 431.9 L478.0 422.2 L488.4 413.5 L500.3 408.0 L511.1 398.5 M1221.5 327.7 L1235.4 328.1 L1242.6 329.8 L1254.8 332.2 L1261.4 338.8 M1048.2 199.3 L1054.9 206.9 L1059.9 214.4 L1066.8 218.9 L1074.7 219.5 M479.2 351.8 L468.5 349.8 L460.5 342.7 L449.3 338.5 L441.7 339.0 M371.5 495.9 L380.6 492.8 L389.3 489.0 L399.0 487.2 L411.1 478.9 M1129.1 513.5 L1118.1 524.0 L1111.5 531.9 L1106.4 542.3 L1098.4 552.9 M1226.5 134.5 L1213.8 140.1 L1201.7 144.1 L1188.2 151.5 L1179.1 155.9 M1176.0 560.3 L1186.8 559.8 L1196.4 559.4 L1205.0 563.3 L1218.7 570.1 M923.8 350.0 L919.3 361.2 L913.6 367.6 L908.2 375.9 L902.3 389.8 M826.0 219.3 L820.0 224.0 L814.4 226.6 L809.9 231.4 L803.1 234.6 M557.5 516.7 L562.1 502.0 L567.6 487.8 L565.7 472.6 L564.0 464.9 M1030.1 598.1 L1024.8 611.9 L1017.4 621.2 L1011.4 623.3 L1006.7 628.8 M321.3 500.4 L314.1 497.8 L302.0 498.1 L286.6 495.4 L270.8 495.2 M1251.2 686.7 L1246.4 680.6 L1238.0 676.1 L1233.3 671.5 L1224.4 662.3 M1071.9 414.2 L1060.1 412.4 L1050.1 412.8 L1037.2 405.9 L1030.8 396.2 M674.1 488.9 L686.9 494.2 L692.5 496.6 L699.8 503.7 L706.4 513.3 M1010.9 305.7 L1025.5 310.2 L1033.8 314.0 L1042.2 316.4 L1052.2 326.1 M1069.2 573.8 L1078.3 575.3 L1085.9 579.3 L1092.1 583.6 L1097.7 593.0 M568.5 639.9 L575.4 651.6 L586.5 659.4 L598.0 669.2 L605.1 676.6 M1211.0 96.7 L1208.3 88.4 L1198.1 77.8 M550.4 514.7 L540.6 509.9 L534.5 504.6 L529.0 497.7 L517.9 487.4 M1040.3 336.5 L1049.0 323.7 L1052.8 317.6 L1058.5 312.8 L1064.3 309.7 M1264.6 391.6 L1258.6 380.8 L1253.5 374.0 L1251.7 367.9 L1249.7 361.4 M1131.0 620.6 L1141.5 622.4 L1153.5 628.1 L1168.4 631.8 L1175.7 630.9 M1095.1 118.1 L1098.8 126.7 L1109.8 137.3 L1120.1 146.5 L1133.9 152.9 M515.8 629.2 L511.8 616.1 L510.3 604.9 L513.2 594.8 L510.3 580.0" fill="none" stroke="#f3905e" stroke-width="1.1" opacity="0.8"/><path d="M1086.3 483.3 L1082.6 473.3 L1083.1 457.7 L1087.0 451.2 L1095.0 442.8 M695.4 149.0 L702.8 157.1 L711.1 162.1 L722.2 169.9 L728.0 174.9 M1164.8 279.0 L1171.8 281.4 L1186.1 287.8 L1197.1 291.0 L1203.4 291.4 M577.4 449.2 L569.8 438.8 L558.6 428.1 L551.8 418.9 L549.2 406.5 M651.7 433.1 L645.2 438.5 L638.6 439.3 L629.9 446.9 L624.5 456.6 M415.3 583.9 L411.0 569.3 L414.8 557.1 L418.0 552.0 L418.2 541.7 M1245.8 243.4 L1235.8 245.1 L1224.5 241.3 L1219.9 237.3 L1212.6 234.5 M1112.3 106.1 L1123.6 96.5 L1130.7 90.6 L1140.7 89.3 L1147.3 90.1 M1110.5 677.8 L1115.3 685.1 M945.9 659.8 L956.3 666.2 L962.0 671.4 L968.1 681.1 M874.4 560.6 L880.7 570.5 L885.4 579.4 L888.0 585.0 L896.4 590.8 M531.1 531.9 L528.3 539.9 L529.9 550.5 L532.5 559.5 L532.3 567.7 M953.9 582.6 L939.3 587.0 L931.6 588.3 L926.4 592.6 L922.0 598.0 M933.3 315.3 L927.5 329.6 L927.0 337.1 L928.4 346.2 L924.1 358.6 M718.5 147.9 L732.8 145.5 L740.4 145.5 L746.9 146.6 L756.1 148.2 M400.0 522.6 L398.5 515.1 L398.6 504.8 L400.0 498.0 L403.8 493.3 M517.4 298.9 L526.8 307.7 L528.9 316.8 L535.0 328.0 L542.5 334.6 M971.9 320.0 L982.1 325.1 L989.7 338.3 L998.9 344.2 L1005.7 348.4 M953.7 362.1 L955.6 346.9 L960.7 337.5 L961.4 326.7 L956.6 314.7 M980.7 415.8 L990.8 407.4 L997.6 405.0 L1003.2 401.6 L1015.1 395.9 M639.6 492.1 L632.3 496.9 L621.9 497.0 L616.2 500.9 L602.4 505.7 M921.5 141.0 L927.6 137.3 L937.4 129.2 L939.2 123.1 L940.9 108.4 M874.1 670.1 L872.6 658.5 L867.3 648.7 L862.7 640.5 L855.9 631.7 M873.9 184.7 L872.0 195.5 L871.0 208.1 L874.3 218.9 L881.7 230.5 M986.8 547.7 L971.8 550.6 L962.2 552.3 L953.1 556.5 L939.2 559.0 M771.0 515.2 L773.7 524.4 L778.5 532.7 L781.4 545.7 L785.9 552.8 M1065.6 465.5 L1061.7 453.1 L1058.1 447.6 L1053.9 442.9 L1051.8 431.9 M954.1 668.2 L954.3 658.9 L948.2 646.3 L946.4 635.6 L943.6 627.4 M775.5 502.8 L789.8 499.4 L799.5 496.2 L813.0 488.2 L817.7 482.2 M574.2 639.3 L580.4 626.2 L588.5 619.9 L595.6 608.2 L598.4 601.5 M1181.1 325.7 L1173.7 330.0 L1169.3 338.9 L1167.4 344.7 L1165.1 358.1 M625.0 481.7 L619.3 479.3 L609.4 472.2 L601.9 469.3 L591.4 458.6 M527.7 420.9 L521.6 419.3 L509.2 418.7 L498.2 416.9 L490.4 419.1 M654.5 626.5 L656.6 634.6 L655.2 642.9 L652.6 652.3 L656.4 665.8 M1091.0 215.0 L1093.2 199.3 L1089.4 190.2 L1081.3 181.0 L1075.9 167.7 M835.2 291.7 L833.8 283.2 L835.3 272.9 L839.9 267.8 L845.0 261.5 M722.2 370.1 L717.0 379.9 L710.2 383.6 L700.6 388.8 L688.9 397.6 M504.5 610.4 L498.9 621.2 L494.2 628.7 L493.3 644.3 L494.0 651.4 M940.7 385.8 L936.7 399.7 L935.8 409.8 L930.1 417.5 L926.4 424.2 M946.6 472.1 L939.1 475.7 L928.6 476.8 L919.2 474.0 L914.0 470.5 M514.4 664.4 L512.1 653.7 L510.1 645.9 L502.7 635.9 L499.3 628.1 M929.1 128.5 L918.5 125.1 L907.1 124.0 L896.9 127.7 L889.7 129.2 M601.3 481.1 L588.7 475.4 L581.6 471.3 L568.7 465.1 L557.0 458.3 M1246.5 574.4 L1235.8 568.7 L1220.5 569.8 L1208.8 563.5 L1194.7 560.4 M472.9 578.1 L459.5 584.6 L447.1 591.8 L436.3 595.1 L428.4 594.0 M1177.0 260.2 L1183.7 260.0 L1194.1 253.7 L1198.2 247.3 L1201.0 238.9 M1198.0 628.5 L1208.2 626.1 L1216.9 627.3 L1228.2 635.7 L1233.3 642.2 M389.3 641.3 L376.2 634.8 L363.2 634.3 L349.4 634.4 L341.4 634.9 M1233.4 222.8 L1236.4 214.8 L1242.0 206.6 L1244.2 198.7 L1251.2 192.1 M1154.9 272.0 L1160.5 284.1 L1163.0 293.8 L1164.6 301.2 L1161.6 311.5 M794.6 551.5 L795.2 561.1 L793.1 567.7 L792.5 580.0 L792.3 589.8 M864.8 181.5 L857.1 193.2 L853.1 207.0 L849.0 218.3 L845.5 224.6 M1058.6 229.8 L1069.7 223.5 L1079.9 222.1 L1095.4 223.1 L1102.1 221.0 M702.1 371.2 L714.1 379.5 L720.8 382.9 L732.6 383.9 L742.9 380.9 M824.8 325.8 L819.2 323.2 M337.4 538.9 L330.2 535.1 L324.0 528.5 L320.2 521.1 L315.5 509.5 M363.7 458.2 L355.5 450.0 L352.1 443.9 L350.7 429.3 M544.4 235.1 L531.5 240.4 L524.5 241.4 L519.0 244.1 L513.4 248.4 M980.4 547.2 L986.4 544.9 L996.4 544.2 L1005.4 548.5 L1011.9 550.0 M1225.1 372.9 L1212.8 378.8 L1202.1 379.4 L1193.0 383.6 L1182.9 383.3 M945.1 403.8 L936.7 405.1 L922.1 406.3 L914.0 411.7 L898.4 413.8 M916.9 588.0 L909.6 593.3 L897.3 598.2 L888.0 606.5 L877.2 613.0 M617.2 428.2 L615.9 440.8 L618.1 454.6 L622.5 465.2 L622.6 472.3 M1013.6 84.3 L1021.1 73.4 L1024.4 66.3 L1027.8 55.9 L1029.4 48.8 M810.2 235.1 L820.0 231.6 L832.2 221.8 L840.1 212.1 L848.9 207.5 M1037.2 221.2 L1047.6 222.7 L1054.3 227.1 L1066.1 233.8 L1073.4 235.7 M1216.0 623.3 L1216.0 633.5 L1221.6 642.3 L1222.1 651.3 L1221.6 664.4 M361.6 640.7 L373.4 646.4 L383.1 645.1 L392.1 639.3 L395.1 632.4 M805.2 129.0 L808.1 121.0 L808.7 106.6 L802.1 94.9 L789.2 86.4 M698.4 428.5 L700.0 422.0 L705.3 411.4 L711.1 404.8 L716.4 399.0 M726.6 223.1 L718.2 220.5 L712.1 217.4 L704.7 209.3 L698.5 205.9 M796.6 367.5 L793.2 358.0 L794.3 349.3 L804.0 338.0 L818.8 333.7 M551.0 569.3 L536.0 563.9 L523.8 556.8 L518.2 553.0 L514.2 546.3 M552.9 440.5 L558.0 452.7 L567.7 460.7 L578.2 463.0 L590.1 467.9 M1237.1 294.2 L1226.6 301.7 L1214.8 305.8 L1204.3 310.9 L1197.1 314.2 M1226.6 667.2 L1234.0 659.5 L1241.8 656.2 L1254.8 654.8 L1267.9 660.6 M1158.2 214.0 L1160.1 205.0 L1160.7 191.1 L1167.1 178.1 L1171.9 172.1 M451.9 409.2 L454.9 415.6 L464.8 424.3 L478.2 429.8 L492.4 432.4 M312.3 600.0 L309.4 615.3 L310.6 623.8 M992.7 418.3 L984.2 420.7 L974.9 418.0 L965.3 406.6 L952.1 400.7 M320.5 502.2 L327.1 492.7 L333.4 488.6 L340.8 484.1 L347.1 479.3 M991.3 412.5 L995.3 401.2 L1005.8 391.8 L1013.2 386.2 L1022.8 384.9 M989.4 645.4 L982.6 631.6 L981.3 621.2 L978.9 607.8 L976.2 601.3 M904.8 565.8 L901.7 580.4 L903.4 587.6 L905.7 596.6 L901.1 611.9 M734.9 555.5 L720.7 548.9 L713.9 548.6 L707.7 548.7 L697.6 549.0 M1231.4 308.9 L1241.2 302.1 L1246.6 294.9 L1252.5 286.9 L1260.6 279.3 M615.3 434.4 L624.0 431.0 L627.9 425.3 L628.7 415.1 L634.6 403.5 M1242.9 584.0 L1238.0 580.4 L1230.4 576.3 L1225.1 572.3 L1217.6 566.1 M883.8 115.3 L876.2 101.4 L874.9 95.0 L878.2 82.8 L878.1 67.6 M1106.3 621.8 L1105.5 631.6 L1107.8 645.0 L1108.1 654.3 L1107.7 669.6 M853.1 633.8 L849.8 628.5 L843.1 619.0 L837.9 604.3 L835.8 593.7 M919.0 386.7 L920.6 380.8 L921.1 366.0 L914.6 353.8 L903.7 347.6 M1081.1 194.8 L1074.9 206.2 L1068.8 216.6 L1065.1 227.9 L1054.5 236.8 M1228.9 200.7 L1219.5 201.0 L1212.1 198.5 L1199.5 193.2 L1195.7 188.3 M687.7 396.1 L692.9 388.4 L694.2 381.2 L693.5 368.2 L693.8 361.0 M1082.2 369.7 L1086.3 383.4 L1095.3 395.8 L1097.4 403.9 L1108.4 413.5 M1106.2 103.4 L1111.4 92.2 L1123.1 81.5 L1131.4 69.9 L1139.7 66.0 M967.1 484.8 L972.7 478.1 L977.2 467.6 L976.7 453.0 L980.3 445.4 M980.5 477.6 L986.7 489.8 L991.2 495.1 L1002.5 502.9 L1014.4 510.5 M640.6 611.9 L652.5 618.5 L665.1 618.6 L672.6 614.7 L686.8 610.5 M699.4 332.2 L707.8 332.3 L720.1 336.8 L728.9 344.0 L733.2 349.8 M575.4 520.5 L579.1 528.5 L579.1 540.9 L579.3 550.7 L572.1 564.3 M738.9 408.4 L742.3 400.6 M1050.0 141.8 L1039.4 140.0 L1025.0 139.7 L1016.4 135.0 L1004.0 134.5 M1022.6 640.1 L1014.7 632.3 L1005.6 627.1 L992.2 620.1 L983.6 607.5 M766.6 666.8 L768.9 679.0 L766.4 688.8 M1127.5 572.7 L1120.0 575.8 L1109.3 576.8 L1101.5 578.4 L1088.4 576.2 M386.9 675.7 L390.2 685.3 M1222.5 451.6 L1220.8 458.1 L1217.5 469.4 L1214.2 484.9 L1213.1 494.4 M708.1 151.6 L719.1 148.6 L727.0 145.5 L736.1 139.5 L748.7 130.0 M849.6 174.5 L859.0 173.9 L873.4 177.8 L887.1 177.1 L898.4 175.8 M820.1 67.7 L830.6 75.1 L844.2 82.0 L850.1 88.9 L860.9 92.7 M938.6 185.8 L944.8 187.5 L955.2 193.8 L965.3 196.7 L973.1 196.4 M477.1 570.2 L467.6 570.5 L456.3 566.6 L447.7 561.7 L441.1 557.3 M1250.4 476.9 L1243.9 474.4 L1235.7 473.0 L1230.6 469.6 L1217.8 462.3 M1063.8 507.2 L1063.8 520.3 L1066.9 533.1 L1072.4 545.6 L1077.1 558.9 M1262.0 286.1 L1273.5 276.9 M679.0 540.4 L678.1 554.2 L676.5 567.7 L675.9 574.0 L672.4 581.5 M552.8 472.7 L555.4 462.6 L561.8 451.6 L563.8 440.5 L567.7 427.7 M493.0 242.0 L492.1 251.4 L487.7 262.4 L488.0 275.7 L494.2 287.7 M545.7 374.7 L537.2 387.6 L532.8 400.3 L526.6 410.2 L522.6 425.1 M1233.5 48.5 L1231.3 56.2 M323.3 583.3 L326.5 597.9 M544.1 415.9 L534.6 422.0 L521.8 425.2 L508.0 431.5 L496.4 432.5 M764.1 254.2 L767.3 265.9 L777.7 277.1 L779.4 283.2 L779.8 291.5 M822.8 582.2 L815.3 592.5 L812.1 604.3 L809.5 619.9 L812.1 632.7 M815.6 153.4 L813.1 141.4 L814.8 134.3 L813.3 120.8 L811.1 105.6 M1234.6 263.5 L1242.3 265.6 L1257.0 270.3 L1271.3 268.2 M886.4 105.0 L896.6 95.7 L904.8 91.5 L914.6 89.0 L921.0 89.3 M1211.0 289.9 L1215.2 276.4 L1215.9 265.0 L1210.6 255.5 L1198.2 247.7 M961.0 316.3 L975.5 322.0 L988.5 320.3 L1000.4 322.1 L1014.2 315.7 M728.0 426.8 L728.9 420.5 L734.1 413.6 L734.8 406.2 L743.3 395.9 M1176.2 472.1 L1166.1 471.3 L1161.1 467.8 L1155.4 464.6 L1152.3 458.3 M1230.8 586.8 L1222.8 576.6 L1216.0 568.0 L1206.1 563.0 L1201.2 557.6 M1155.1 313.0 L1157.3 323.3 L1157.7 335.0 L1153.1 345.1 L1146.2 359.4 M421.0 311.8 L429.1 319.0 L434.1 331.0 L435.7 344.4 L440.3 356.9 M501.1 400.6 L496.5 394.5 L486.0 384.9 L479.0 370.7 L472.5 365.8 M404.1 510.4 L406.1 496.8 L408.1 485.3 L415.8 475.6 L424.9 467.8 M782.1 532.0 L771.8 531.8 L761.5 532.7 L751.9 532.8 L741.7 534.2 M662.5 671.7 L675.7 671.6 L686.1 670.1 L695.8 669.9 L701.6 667.8 M1152.8 650.3 L1151.1 659.4 L1156.2 673.5 L1155.7 681.9 M1077.6 345.3 L1070.4 357.2 L1058.3 365.4 L1052.4 375.7 L1040.6 381.7 M748.2 134.3 L753.5 138.4 L760.0 149.3 L768.1 161.8 L768.8 173.9 M397.3 422.6 L386.6 433.5 L380.4 437.1 L374.1 444.2 L367.4 450.5 M729.0 568.7 L730.6 577.9 L725.0 592.3 L723.0 604.3 L726.1 613.9 M908.3 454.8 L908.2 462.0 L907.4 469.7 L909.1 481.8 L905.4 492.3 M548.6 420.8 L544.9 427.5 L542.7 437.6 L537.8 443.4 L535.4 450.4 M508.6 256.0 L499.1 259.4 L489.9 263.1 L474.9 263.8 L459.8 265.9 M544.6 675.6 L535.5 672.0 L528.2 671.2 L520.1 666.1 L512.7 658.4 M814.0 174.5 L821.8 184.6 L825.2 189.6 L828.8 199.3 L835.3 204.9 M506.5 574.9 L498.1 574.0 L489.4 575.2 L476.2 579.7 L463.3 579.5 M1163.7 465.0 L1171.2 466.3 L1182.4 464.9 L1193.9 468.0 L1202.2 469.5 M1258.2 529.7 L1257.7 545.5 L1261.5 559.5 L1269.8 568.9 M494.1 563.7 L506.9 564.2 L515.4 562.2 L527.3 551.8 L530.9 540.2 M725.5 645.0 L730.5 656.2 L733.0 667.1 L741.5 679.1 L748.3 682.8 M536.0 374.0 L522.7 375.1 L512.9 371.0 L498.7 373.3 L491.9 379.5 M439.7 431.5 L437.5 422.8 L439.7 410.1 L436.0 397.8 L436.6 387.7 M451.6 468.4 L451.6 476.0 L452.5 483.2 L455.4 494.3 L457.4 504.2 M1081.0 97.1 L1068.5 104.7 L1054.8 105.3 L1041.0 105.4 L1033.8 104.8 M1154.1 249.3 L1148.1 252.9 L1134.7 256.9 L1119.9 255.9 L1112.6 257.0 M1043.3 490.6 L1039.2 496.9 L1030.4 502.9 L1021.3 504.9 L1011.2 509.6 M1027.7 613.8 L1020.0 620.2 L1006.8 623.6 L997.3 625.4 L984.0 632.0 M1081.7 238.4 L1097.1 240.9 L1110.2 235.6 L1121.0 231.7 L1130.6 228.6 M843.9 98.5 L848.0 92.4 L856.9 83.7 L868.8 78.6 L875.3 79.3 M1060.2 139.2 L1053.6 135.5 L1040.9 127.6 L1034.3 120.1 L1028.3 113.6 M1237.5 548.7 L1229.2 538.3 L1220.4 527.5 L1209.2 517.7 L1203.0 509.2 M849.2 563.2 L844.7 559.1 L840.1 546.8 L834.9 533.3 L828.2 526.7 M996.8 575.2 L984.6 577.7 L979.3 582.7 L975.7 593.8 L974.8 602.4 M736.9 90.8 L748.3 88.9 L757.1 86.8 L766.5 85.8 L780.5 92.7 M1009.3 576.9 L1018.7 577.1 L1028.0 572.9 L1042.2 575.1 L1048.4 580.4 M815.5 235.4 L810.7 224.4 L802.7 213.7 L797.4 201.7 L792.7 192.2 M754.8 440.5 L754.4 455.3 L748.1 468.0 L744.8 475.1 L742.6 488.3 M1261.0 112.3 L1270.4 111.0 M1123.6 259.7 L1130.0 253.4 L1136.2 239.0 L1143.1 226.5 L1143.0 215.1 M1015.4 679.5 L1021.7 672.0 L1032.6 669.0 L1040.8 671.3 L1055.6 666.7 M557.5 404.4 L546.6 415.2 L532.3 418.8 L520.1 426.1 L515.6 435.3 M1221.5 205.5 L1215.3 211.1 L1204.2 216.9 L1195.6 229.5 L1194.5 242.4 M376.1 688.5 L379.7 675.1 L391.0 664.7 L397.6 659.1 L409.9 649.1 M1012.7 475.4 L1018.0 465.0 L1024.2 460.0 L1030.3 458.5 L1041.8 456.1 M442.8 639.3 L435.5 646.3 L427.3 652.5 L425.1 659.0 L421.0 665.2 M549.3 564.9 L556.4 561.8 L563.7 550.4 L569.8 542.9 L570.9 532.6 M531.5 422.2 L537.5 419.1 L544.4 417.5 L553.1 411.9 L562.3 412.0 M458.4 301.5 L451.5 289.4 L445.9 285.1 L438.8 277.3 L437.0 270.5 M1028.3 475.4 L1024.6 486.9 L1018.4 495.7 L1011.3 506.4 L1004.5 514.1 M481.6 341.4 L470.4 330.0 L464.3 323.0 L453.7 316.9 L447.8 310.7 M936.5 603.3 L943.8 617.3 L951.5 622.2 L963.0 629.2 L974.7 639.0 M813.4 451.2 L812.1 461.2 L806.0 468.7 L797.7 476.4 L790.6 488.3 M613.0 613.4 L605.4 618.1 L592.5 623.9 L583.8 634.6 L578.0 644.2 M711.0 325.0 L724.7 331.5 L734.5 340.1 L740.5 342.0 L750.3 350.1 M915.5 243.3 L909.0 252.5 L908.7 261.9 L909.6 268.5 L903.4 282.2 M1095.2 42.8 L1087.9 53.8 L1076.5 61.8 L1069.5 63.7 L1064.9 68.9 M1122.2 579.0 L1107.9 582.1 L1100.7 587.9 L1096.0 603.0 L1093.3 616.4 M1082.3 417.7 L1097.1 421.4 L1101.9 426.3 L1105.6 433.7 L1111.5 441.0 M724.5 123.3 L737.5 123.0 L751.2 123.0 L761.1 121.1 L774.1 122.4 M1166.4 241.0 L1175.6 233.8 L1183.9 225.6 L1185.9 218.9 L1186.3 211.6 M347.6 505.9 L347.7 497.9 L351.8 484.2 L355.3 476.7 L360.1 468.0 M1144.1 451.0 L1150.0 444.7 L1154.6 439.9 L1160.3 430.1 L1167.6 416.9 M863.5 454.4 L857.4 447.0 L842.2 442.6 L836.3 438.3 L828.2 437.0 M942.2 125.2 L948.3 125.9 L957.9 124.2 L963.2 121.2 L969.0 115.1 M318.7 584.2 L318.2 578.2 L312.3 564.4 M1100.3 619.5 L1108.6 627.5 L1117.4 630.3 L1128.8 635.9 L1138.9 642.8 M315.8 584.4 L322.1 582.0 L329.8 581.7 L337.6 579.9 L351.5 582.8 M1112.7 288.0 L1121.7 280.5 L1129.1 276.6 L1134.8 272.5 L1142.3 270.5 M924.9 454.1 L913.6 446.7 L902.5 444.1 L894.2 445.5 L888.6 449.3 M641.8 616.2 L634.6 612.4 L625.3 606.0 L618.3 605.8 L606.4 604.5 M378.4 542.3 L377.9 553.6 L380.2 568.9 L382.9 578.8 L386.1 592.8 M1263.9 540.2 L1253.1 534.2 L1245.3 520.6 L1243.7 512.6 L1242.4 502.3 M525.7 547.9 L524.9 558.8 L525.1 571.9 L521.2 587.3 L510.6 596.5 M557.5 475.0 L548.4 469.9 L542.4 467.9 L531.6 464.6 L524.6 464.2 M772.4 85.9 L777.4 93.9 L783.4 103.5 L788.1 109.1 L799.2 112.6 M1246.9 222.8 L1241.3 235.1 L1235.7 247.9 L1237.0 255.1 L1241.9 263.4 M1242.5 325.5 L1236.1 314.8 L1230.2 301.8 L1226.5 296.7 L1225.6 285.4 M868.1 83.3 L865.9 71.1 L859.4 57.4 L854.4 50.1 M1076.7 88.8 L1063.8 91.4 L1056.7 90.3 L1049.0 84.8 L1043.1 75.8 M1170.0 350.7 L1173.9 360.9 L1180.0 365.6 L1185.2 376.1 L1185.4 383.6 M768.8 344.6 L782.8 350.4 L791.6 357.2 L801.8 367.6 L804.6 379.3 M799.9 418.7 L792.8 420.8 L781.4 421.0 L767.5 424.6 L752.9 420.5 M550.5 523.5 L556.2 514.0 L569.4 507.2 L575.5 503.7 L584.9 497.5 M1066.8 160.9 L1062.6 165.3 L1057.2 169.7 L1047.6 173.4 L1039.5 172.2 M1156.4 187.9 L1163.0 186.6 L1177.9 181.5 L1189.4 175.1 L1194.9 165.4 M826.4 103.7 L818.0 99.8 L809.4 90.2 L802.8 87.6 L794.3 89.0 M921.3 669.5 L928.3 671.2 L939.6 678.8 L953.2 687.3 M895.8 445.7 L896.4 439.6 L901.6 432.8 L907.0 419.1 L905.7 405.3 M1175.2 405.5 L1163.2 404.4 L1149.8 401.3 L1142.9 399.6 L1130.4 400.7 M544.9 557.6 L529.3 555.8 L521.1 553.9 L507.2 549.7 L497.0 548.3 M863.5 681.7 L853.1 676.1 L842.8 673.2 L837.4 670.1 L829.6 665.4 M884.7 573.4 L875.8 573.9 L865.3 577.6 L857.5 580.1 L846.5 579.9 M1116.7 626.3 L1121.9 622.1 L1127.3 618.9 L1140.0 617.5 L1150.0 614.4 M966.5 144.1 L955.3 150.3 L948.8 153.1 L942.5 158.8 L939.2 170.8 M859.0 640.8 L851.9 632.8 L846.2 626.1 L835.7 614.8 L831.6 610.5 M908.6 371.0 L895.8 366.2 L889.6 367.0 L877.7 365.8 L867.1 362.7 M1115.4 431.2 L1130.2 428.6 L1137.8 427.7 L1152.9 429.7 L1163.4 436.4 M1087.8 96.9 L1078.5 95.6 L1064.4 99.7 L1058.4 99.9 L1048.6 106.1 M1231.0 441.5 L1234.7 430.4 L1234.1 421.1 L1229.2 411.6 L1218.4 405.2 M930.9 628.1 L925.2 614.5 L920.0 600.1 L917.7 593.7 L916.8 586.0 M1260.4 390.5 L1268.0 385.1 M749.1 219.1 L741.0 221.1 L732.4 227.7 L726.4 230.7 M560.7 541.7 L562.3 552.5 L558.3 565.6 L561.5 578.3 L562.6 589.0 M948.8 379.2 L950.1 386.3 L956.0 399.6 L959.6 410.1 L960.5 421.0 M674.8 398.9 L681.2 398.7 L694.0 406.7 L699.6 411.8 L703.1 419.9 M1085.4 463.2 L1080.4 456.2 L1077.9 445.0 L1079.1 430.7 L1077.1 420.8 M1154.6 485.7 L1139.8 485.8 L1131.5 490.6 L1120.7 494.0 L1112.5 496.6 M517.6 475.7 L504.3 482.5 L495.6 481.7 L488.5 481.0 L481.8 481.4 M789.6 662.0 L788.8 653.3 L791.5 647.4 L802.4 637.7 L807.5 623.1 M930.6 292.8 L920.0 296.6 L905.1 295.0 L899.1 295.7 L886.9 292.9 M939.3 88.3 L944.9 96.2 L954.4 108.7 L964.9 115.2 L976.5 115.6 M1021.0 142.3 L1029.4 130.8 L1042.2 122.0 L1053.0 118.2 L1067.0 118.9 M914.0 474.8 L919.5 482.2 L922.5 495.7 L929.6 509.9 L935.1 513.5 M1227.2 273.1 L1216.3 276.2 L1206.0 277.5 L1190.6 280.1 L1180.4 284.8 M767.1 131.7 L775.5 142.9 L779.8 147.8 L781.3 155.1 L779.7 161.3 M934.1 134.9 L934.5 148.5 L935.6 158.6 L938.1 169.5 L945.3 183.3 M835.4 268.4 L826.9 258.9 L814.9 249.3 L805.6 245.0 L794.5 242.5 M574.2 475.3 L565.7 477.9 L554.9 482.0 L542.4 483.2 L535.6 484.4 M946.1 261.6 L951.4 254.9 L953.5 247.8 L959.3 237.5 L962.3 223.8 M959.4 318.6 L952.7 310.7 L943.7 307.2 L937.7 299.5 L934.5 293.4 M1055.4 601.7 L1049.0 610.8 L1046.4 618.5 L1048.0 631.3 L1049.7 646.7 M1239.4 608.2 L1245.6 608.6 L1260.2 602.6 L1272.3 603.4 M714.6 134.7 L707.4 134.5 L697.0 129.1 L691.6 122.0 M1110.8 175.9 L1105.8 168.1 L1096.2 163.0 L1083.8 156.0 L1076.1 154.7 M598.2 561.6 L597.8 567.9 L603.6 579.7 L606.7 586.1 L613.9 599.7 M681.8 402.1 L676.1 405.1 L664.3 405.6 L655.7 407.5 L643.0 416.1 M1120.8 286.0 L1114.7 280.8 L1101.5 278.7 L1090.2 281.7 L1086.1 286.3 M460.2 464.8 L456.8 452.7 L455.3 446.8 L458.6 436.4 L462.9 431.6 M1115.1 349.4 L1117.2 355.8 L1119.0 363.7 L1118.9 371.5 L1115.9 383.3 M994.7 657.8 L989.9 666.5 L978.0 674.5 L966.5 677.8 L953.7 685.8 M1245.6 657.4 L1235.2 665.0 L1221.6 668.1 L1212.0 670.8 L1199.5 669.8 M826.6 607.9 L836.5 603.9 L845.8 592.9 L848.9 578.4 L848.0 571.1 M1035.7 480.5 L1025.3 485.4 L1014.2 484.4 L1003.7 483.0 L990.8 482.6 M408.9 490.0 L420.2 488.5 L426.8 486.3 L434.8 478.1 L448.6 473.2 M479.0 527.0 L483.8 513.2 L483.4 503.9 L483.1 490.6 L482.3 481.6 M1146.2 294.7 L1138.9 302.8 L1130.9 308.1 L1120.8 312.3 L1112.1 325.3 M1235.9 174.4 L1243.4 174.7 L1253.3 179.8 L1262.0 179.1 L1269.7 178.6 M599.0 628.0 L589.6 635.4 L584.9 645.6 L580.9 651.2 L575.2 658.3 M1026.8 440.3 L1033.9 437.0 L1042.8 427.4 L1048.8 424.6 L1056.4 420.0 M756.2 607.1 L745.5 598.6 L734.2 593.9 L723.8 591.2 L711.7 587.6 M1261.6 278.4 L1271.8 266.6 L1274.0 260.7" fill="none" stroke="#c99aaa" stroke-width="1" opacity="0.8"/><path d="M805.4 115.9 L851.1 196.8 L916.4 253.0 L941.7 284.4 L907.1 346.0 L928.4 430.4 L846.0 520.2 L828.7 566.7 M1115.1 113.3 L1062.2 184.6 L1045.3 228.6 L1033.4 275.6 L941.7 284.4 M805.4 115.9 L761.8 171.5 M1115.1 113.3 L1010.2 100.2 L923.8 98.7 L805.4 115.9 M506.3 391.8 L422.6 385.7 L373.4 462.3 L313.6 488.8 L369.4 539.9 L431.9 576.5 L469.1 651.0 M506.3 391.8 L587.4 488.3 L619.3 619.1 M587.4 488.3 L671.9 463.1 L863.3 443.7 L928.4 430.4 L1097.2 396.3 L1139.7 426.9 L1172.9 441.8 M907.1 346.0 L1097.2 396.3 M506.3 391.8 L457.1 305.6 L462.5 196.7 M457.1 305.6 L566.1 298.2 L627.3 281.2 M701.8 344.2 L907.1 346.0 M369.4 539.9 L441.2 510.9 L587.4 488.3 M846.0 520.2 L972.2 526.0 L1115.7 523.9 M956.3 567.2 L1081.2 628.4 L1119.7 660.3 M1078.5 568.6 L1081.2 628.4 M1172.9 441.8 L1121.1 463.6 M1115.1 113.3 L1127.7 128.0 L1220.8 135.1" fill="none" stroke="#8e5a62" stroke-width="1.2" opacity="0.8"/><path d="M506.3 391.8 L486.4 367.9 L530.2 348.5 L566.1 298.2 L575.0 262.0 L556.0 204.0 L672.0 150.0 L717.2 162.0 L761.8 171.5 L800.0 190.0 L851.1 196.8 L907.9 146.3 L980.0 125.0 L1073.0 118.0 L1127.7 128.0 L1220.8 135.1 L1276.0 128.0 M680.9 124.2 L805.4 115.9 L869.8 117.3 L920.0 100.0 L1000.0 95.0 M805.4 115.9 L825.0 160.0 L851.1 196.8 L876.5 223.3 L916.4 253.0 L941.7 284.4 L907.1 346.0 M1073.0 118.0 L1077.3 125.5 L1080.0 150.0 L1062.2 184.6 L1045.3 228.6 L1033.4 275.6 L941.7 284.4 M907.1 346.0 L875.2 362.6 L749.0 399.3 L745.0 427.7 L671.9 463.1 L587.4 488.3 M1033.4 275.6 L1100.0 272.0 L1203.5 273.8 L1276.0 272.0 M800.0 190.0 L778.2 233.9 L791.5 279.1 L780.0 320.0 L701.8 344.2 L615.4 391.6 L506.3 391.8 M506.3 391.8 L555.5 413.1 L600.0 432.0 L671.9 463.1 L738.3 468.9 L863.3 443.7 L928.4 430.4 L1048.0 413.1 L1139.7 426.9 L1179.5 411.8 L1276.0 400.0 M1097.2 396.3 L1139.7 426.9 L1172.9 441.8 L1276.0 470.0 M907.1 346.0 L888.5 385.7 L869.9 399.3 L863.3 443.7 L846.0 520.2 L828.7 566.7 L783.5 580.0 L718.4 592.0 L746.3 628.4 L760.0 690.0 M313.6 488.8 L441.2 510.9 L499.7 486.7 L587.4 488.3 L764.9 499.5 L846.0 520.2 L901.8 536.7 L956.3 567.2 L1006.8 595.7 L1071.9 604.7 L1081.2 628.4 L1102.5 648.3 L1119.7 660.3 L1160.0 690.0 M506.3 391.8 L587.4 488.3 L572.8 518.6 L629.9 579.7 L619.3 619.1 L674.6 679.7 L690.0 690.0 M506.3 391.8 L441.2 413.9 L373.4 462.3 L313.6 488.8 L315.0 500.3 L369.4 539.9 L318.9 566.7 L280.0 600.0 M369.4 539.9 L388.0 562.7 L431.9 576.5 L469.1 651.0 L480.0 690.0 M295.0 540.7 L369.4 539.9 L534.2 571.8 L687.8 552.1 L828.7 566.7 M587.4 488.3 L534.2 571.8 L494.4 633.2 L469.1 651.0 L419.9 657.6 L362.8 670.1 L304.3 679.7 L250.0 690.0 M558.2 620.4 L619.3 619.1 L718.4 592.0 M828.7 566.7 L835.3 605.8 L856.6 632.4 L865.9 672.2 L880.0 690.0 M506.3 391.8 L470.0 370.0 L457.1 305.6 L486.4 295.0 L478.4 253.0 L462.5 196.7 M1276.0 380.0 L1215.0 440.0 L1208.8 490.2 L1208.8 529.2 L1154.3 591.7 L1196.8 628.4 L1182.2 646.5 L1184.9 674.4 L1190.0 690.0 M928.4 623.6 L957.6 654.2 L982.9 675.4 L1000.0 690.0 M901.8 536.7 L972.2 526.0 L1067.9 538.5 L1078.5 568.6 L1161.0 566.7 L1154.3 591.7 M600.7 440.5 L587.4 488.3 M764.9 499.5 L738.3 468.9 M422.6 385.7 L506.3 391.8 M431.9 576.5 L410.6 633.2 L313.6 652.8 L284.4 669.0 L200.0 690.0 M369.4 539.9 L257.8 570.2 M805.4 115.9 L872.0 74.1 M1115.1 113.3 L1074.0 82.2 L1099.2 47.8 M1115.1 113.3 L1179.7 72.5 M1062.2 184.6 L1129.4 182.0 L1195.6 185.4 L1228.7 224.1 M1172.9 252.5 L1121.1 295.5 L1081.2 324.3 L1017.4 342.9 L907.1 346.0 M1139.7 426.9 L1067.9 437.8 L1012.1 462.3 L928.4 430.4 M1231.4 369.8 L1179.5 411.8 M1196.8 628.4 L1235.3 631.8 L1276.0 640.0 M1184.9 674.4 L1203.5 656.8 L1276.0 660.0" fill="none" stroke="#e8506c" stroke-width="1.6" opacity="0.9" stroke-linejoin="round"/><path d="M1120.0 4.0 L1159.9 26.6 L1179.8 29.2 L1189.8 46.5 L1206.4 66.4 L1213.0 76.4 L1269.5 78.4 L1274.8 90.0 L1269.9 127.6 L1259.3 148.8 L1251.3 233.9 L1235.3 236.5 L1224.7 303.0 L1123.7 303.0 L1110.4 318.9 L1129.0 329.6 L1107.8 350.0 L1110.4 353.3 L1145.0 361.3 L1192.8 366.6 L1203.5 361.3 L1224.7 382.5 L1230.0 433.0 L1203.5 446.3 L1171.6 470.2 L1131.7 478.2 L1107.8 494.2 L1107.8 502.1 L1145.0 515.4 L1150.3 526.0 L1139.7 542.0 L1113.1 550.0 L1091.8 542.0 L1054.6 552.6 L1028.0 563.3 L1006.8 557.9 L1012.1 571.2 L985.5 568.6 L937.7 560.6 L932.4 550.0 L911.1 547.3 L895.1 560.6 L857.9 571.2 L863.3 579.2 L868.6 595.1 L860.6 603.1 L887.2 608.4 L887.2 621.7 L913.8 629.7 L908.4 645.6 L932.4 658.9 L945.6 690.0" fill="none" stroke="#b86a80" stroke-width="2.6" opacity="0.95"/><rect x="126.2" y="111.6" width="139.60000000000002" height="42.599999999999994" fill="#cf969e" stroke="#d89aa2" stroke-width="1" opacity="0.8"/><rect x="451.8" y="85" width="66.49999999999994" height="30.599999999999994" fill="#cf969e" stroke="#d89aa2" stroke-width="1" opacity="0.8"/><rect x="336.2" y="216.6" width="39.900000000000034" height="21.30000000000001" fill="#cf969e" stroke="#d89aa2" stroke-width="1" opacity="0.8"/><rect x="363" y="183" width="50" height="22" fill="#cf969e" stroke="#d89aa2" stroke-width="1" opacity="0.8"/><path d="M342.9 305.6 L313.6 279.1 L305.6 247.2 L318.9 212.6 L353.5 191.4 L377.4 170.1 L414.6 151.5 L435.9 170.1 L438.5 239.2 L414.6 265.8 L377.4 289.7 Z" fill="#cc959e" opacity="0.75"/><path d="M0 202 L148.8 247.2 L233.9 300.3 L252.5 332.2 L279.1 350 L300 370" fill="none" stroke="#a890c8" stroke-width="1" stroke-dasharray="4 3"/><path d="M0.0 409.1 L119.6 467.6 L217.9 512.8 L239.2 520.7" fill="none" stroke="#a890c8" stroke-width="1" stroke-dasharray="4 3"/><path d="M0.0 422.4 L106.3 459.6 L207.3 510.1" fill="none" stroke="#a890c8" stroke-width="1" stroke-dasharray="4 3"/><path d="M0.0 518.1 L119.6 512.8 L202.0 504.8 L225.9 512.8" fill="none" stroke="#a890c8" stroke-width="1" stroke-dasharray="4 3"/><path d="M281.7 0.0 L281.7 43.9 L393.4 0.0" fill="none" stroke="#a89078" stroke-width="1" opacity="0.8"/><path d="M0.0 259.1 L43.9 267.1 L43.9 350.0" fill="none" stroke="#a89078" stroke-width="1" opacity="0.8"/><path d="M0.0 414.4 L43.9 414.4 L43.9 340.0" fill="none" stroke="#a89078" stroke-width="1" opacity="0.8"/><path d="M385.4 299.0 L396.0 273.8 L409.3 186.0 L430.6 132.9 L478.4 101.0 L558.1 66.4 L640.0 39.9 L760.0 26.0" fill="none" stroke="#a89078" stroke-width="1" opacity="0.8"/><path d="M0.0 635.4 L62.3 589.7 L124.6 552.4 L199.3 512.9 L224.3 512.9" fill="none" stroke="#a89078" stroke-width="1" opacity="0.8"/><path d="M12.5 690.0 L22.8 670.7 L0.0 670.7" fill="none" stroke="#a89078" stroke-width="1" opacity="0.8"/><path d="M39.5 656.2 L103.8 606.3 L145.3 587.7 L207.6 562.7" fill="none" stroke="#a89078" stroke-width="1" opacity="0.8"/><path d="M281.7 0 L281.7 26 M306 31 L390.7 0 M860 26 L1000 14 L1276 2" fill="none" stroke="#8cc4a0" stroke-width="1"/><path d="M531.6 0.0 L510.0 8.0 L491.7 13.9 L478.4 20.6 L465.0 34.0 L438.0 50.0 L393.4 77.1 L377.4 95.7 L372.1 106.3 L353.5 124.9 L334.9 151.5 L321.6 170.1 L317.6 191.4 L321.6 210.0 L329.6 223.3 L322.9 233.9 L313.6 252.5 L309.6 273.8 L303.0 316.3 L289.7 329.6 L279.1 350.0 L279.1 369.2 L265.8 393.2 L239.2 419.7 L215.9 434.0 L186.9 454.8 L145.3 465.1 L116.3 479.7 L99.7 494.2 L89.3 519.1 L51.9 539.9 L0.0 562.7" fill="none" stroke="#b8687c" stroke-width="2.2" stroke-linejoin="round"/><g font-family="Liberation Sans" opacity="0.88"><text x="196.7" y="132.0" fill="#c83040" font-size="7.5" letter-spacing="0.9" style="font-style:italic;" text-anchor="middle">West van</text><text x="196.7" y="140.0" fill="#c83040" font-size="7.5" letter-spacing="0.9" style="font-style:italic;" text-anchor="middle">Haaksgronden</text><text x="443.9" y="147.9" fill="#70782c" font-size="7.5" letter-spacing="0.9" style="font-style:italic;" text-anchor="middle">Noordzeekustzone</text><text x="483.7" y="155.8" fill="#5a2e38" font-size="7.5" letter-spacing="0.9" style="font-style:italic;" text-anchor="middle">Texel</text><text x="475.7" y="167.8" fill="#6a3a45" font-size="7.5" letter-spacing="0.9" style="" text-anchor="middle">Den Burg</text><text x="405.3" y="175.8" fill="#c83040" font-size="7.5" letter-spacing="0.9" style="font-style:italic;" text-anchor="middle">West van</text><text x="405.3" y="182.4" fill="#c83040" font-size="7.5" letter-spacing="0.9" style="font-style:italic;" text-anchor="middle">Kaap Hoofd</text><text x="462.5" y="199.7" fill="#6a3a45" font-size="7.5" letter-spacing="0.9" style="" text-anchor="middle">Den Helder</text><text x="457.1" y="222.3" fill="#6a3a45" font-size="7.5" letter-spacing="0.9" style="" text-anchor="middle">Julianadorp</text><text x="483.7" y="231.6" fill="#6a3a45" font-size="7.5" letter-spacing="0.9" style="" text-anchor="middle">Anna Paulowna</text><text x="369.4" y="244.9" fill="#c83040" font-size="7.5" letter-spacing="0.9" style="font-style:italic;" text-anchor="middle">Nabij Petten</text><text x="478.4" y="256.0" fill="#6a3a45" font-size="7.5" letter-spacing="0.9" style="" text-anchor="middle">Schagen</text><text x="578.0" y="262.1" fill="#6a3a45" font-size="7.5" letter-spacing="0.9" style="" text-anchor="middle">Medemblik</text><text x="539.5" y="286.9" fill="#a8608a" font-size="7.5" letter-spacing="0.9" style="font-style:italic;" text-anchor="middle">Noord-Holland</text><text x="441.2" y="285.3" fill="#6a3a45" font-size="7.5" letter-spacing="0.9" style="" text-anchor="middle">Schoorl</text><text x="486.4" y="298.0" fill="#6a3a45" font-size="7.5" letter-spacing="0.9" style="" text-anchor="middle">Heerhugowaard</text><text x="566.1" y="301.2" fill="#6a3a45" font-size="7.5" letter-spacing="0.9" style="" text-anchor="middle">Hoorn</text><text x="457.1" y="308.6" fill="#5a2e38" font-size="9.5" letter-spacing="1.1" style="" text-anchor="middle">Alkmaar</text><text x="446.5" y="317.2" fill="#6a3a45" font-size="7.5" letter-spacing="0.9" style="" text-anchor="middle">Heiloo</text><text x="425.2" y="335.8" fill="#6a3a45" font-size="7.5" letter-spacing="0.9" style="" text-anchor="middle">Castricum</text><text x="427.9" y="348.5" fill="#6a3a45" font-size="7.5" letter-spacing="0.9" style="" text-anchor="middle">Heemskerk</text><text x="605.0" y="108.0" fill="#6a7428" font-size="10.5" letter-spacing="1.1" style="font-style:italic;" text-anchor="middle">Waddenzee</text><text x="515.6" y="108.5" fill="#c83040" font-size="7.5" letter-spacing="0.9" style="font-style:italic;" text-anchor="middle">Vlieland</text><text x="515.6" y="115.2" fill="#c83040" font-size="7.5" letter-spacing="0.9" style="font-style:italic;" text-anchor="middle">Range</text><text x="596.7" y="215.1" fill="#c83040" font-size="7.5" letter-spacing="0.9" style="font-style:italic;" text-anchor="middle">Breezanddijk</text><text x="627.3" y="284.2" fill="#6a3a45" font-size="7.5" letter-spacing="0.9" style="" text-anchor="middle">Enkhuizen</text><text x="666.6" y="248.8" fill="#a8608a" font-size="7.5" letter-spacing="0.9" style="font-style:italic;" text-anchor="middle">IJsselmeer</text><text x="623.7" y="336.4" fill="#a8608a" font-size="7.5" letter-spacing="0.9" style="font-style:italic;" text-anchor="middle">Markermeer</text><text x="625.4" y="345.6" fill="#6a7428" font-size="10.5" letter-spacing="1.1" style="font-style:italic;" text-anchor="middle">Markermeer</text><text x="625.4" y="353.0" fill="#6a7428" font-size="10.5" letter-spacing="1.1" style="font-style:italic;" text-anchor="middle">&amp; IJmeer</text><text x="698.5" y="336.4" fill="#a8608a" font-size="7.5" letter-spacing="0.9" style="font-style:italic;" text-anchor="middle">Flevoland</text><text x="701.8" y="347.2" fill="#5a2e38" font-size="9.5" letter-spacing="1.1" style="" text-anchor="middle">Lelystad</text><text x="715.0" y="373.8" fill="#5a2e38" font-size="7.5" letter-spacing="0.9" style="font-style:italic;" text-anchor="middle">Flevopolder</text><text x="615.4" y="394.6" fill="#5a2e38" font-size="9.5" letter-spacing="1.1" style="" text-anchor="middle">Almere</text><text x="680.9" y="127.2" fill="#6a3a45" font-size="7.5" letter-spacing="0.9" style="" text-anchor="middle">Harlingen</text><text x="741.1" y="134.2" fill="#a8608a" font-size="7.5" letter-spacing="0.9" style="font-style:italic;" text-anchor="middle">Fryslân</text><text x="805.4" y="118.9" fill="#5a2e38" font-size="9.5" letter-spacing="1.1" style="" text-anchor="middle">Leeuwarden</text><text x="796.1" y="98.9" fill="#6a3a45" font-size="7.5" letter-spacing="0.9" style="" text-anchor="middle">Stiens</text><text x="717.2" y="165.0" fill="#6a3a45" font-size="7.5" letter-spacing="0.9" style="" text-anchor="middle">Bolsward</text><text x="761.8" y="174.5" fill="#6a3a45" font-size="7.5" letter-spacing="0.9" style="" text-anchor="middle">Sneek</text><text x="851.1" y="199.8" fill="#6a3a45" font-size="7.5" letter-spacing="0.9" style="" text-anchor="middle">Heerenveen</text><text x="869.8" y="120.3" fill="#6a3a45" font-size="7.5" letter-spacing="0.9" style="" text-anchor="middle">Burgum</text><text x="872.0" y="77.1" fill="#6a3a45" font-size="7.5" letter-spacing="0.9" style="" text-anchor="middle">Dokkum</text><text x="924.7" y="91.9" fill="#6a3a45" font-size="7.5" letter-spacing="0.9" style="" text-anchor="middle">Kollum</text><text x="923.8" y="101.7" fill="#6a3a45" font-size="7.5" letter-spacing="0.9" style="" text-anchor="middle">Buitenpost</text><text x="1010.2" y="103.2" fill="#6a3a45" font-size="7.5" letter-spacing="0.9" style="" text-anchor="middle">Zuidhorn</text><text x="1047.1" y="76.0" fill="#6a3a45" font-size="7.5" letter-spacing="0.9" style="" text-anchor="middle">Winsum</text><text x="1099.2" y="50.8" fill="#6a3a45" font-size="7.5" letter-spacing="0.9" style="" text-anchor="middle">Uithuizen</text><text x="1074.0" y="85.2" fill="#6a3a45" font-size="7.5" letter-spacing="0.9" style="" text-anchor="middle">Bedum</text><text x="1179.7" y="75.5" fill="#6a3a45" font-size="7.5" letter-spacing="0.9" style="" text-anchor="middle">Delfzijl</text><text x="1115.1" y="116.3" fill="#a8608a" font-size="7.5" letter-spacing="0.9" style="font-style:italic;" text-anchor="middle">Groningen</text><text x="1077.3" y="128.5" fill="#6a3a45" font-size="7.5" letter-spacing="0.9" style="" text-anchor="middle">Haren</text><text x="1127.7" y="131.0" fill="#6a3a45" font-size="7.5" letter-spacing="0.9" style="" text-anchor="middle">Hoogezand</text><text x="1017.8" y="138.9" fill="#6a3a45" font-size="7.5" letter-spacing="0.9" style="" text-anchor="middle">Roden</text><text x="1062.2" y="140.9" fill="#6a3a45" font-size="7.5" letter-spacing="0.9" style="" text-anchor="middle">Eelde</text><text x="1220.8" y="138.1" fill="#6a3a45" font-size="7.5" letter-spacing="0.9" style="" text-anchor="middle">Winschoten</text><text x="1104.2" y="154.5" fill="#6a3a45" font-size="7.5" letter-spacing="0.9" style="" text-anchor="middle">Zuidlaren</text><text x="1165.4" y="151.5" fill="#6a3a45" font-size="7.5" letter-spacing="0.9" style="" text-anchor="middle">Veendam</text><text x="907.9" y="149.3" fill="#6a3a45" font-size="7.5" letter-spacing="0.9" style="" text-anchor="middle">Drachten</text><text x="897.0" y="184.7" fill="#6a3a45" font-size="7.5" letter-spacing="0.9" style="" text-anchor="middle">Gorredijk</text><text x="972.5" y="189.2" fill="#6a3a45" font-size="7.5" letter-spacing="0.9" style="" text-anchor="middle">Oosterwolde</text><text x="1062.2" y="187.6" fill="#5a2e38" font-size="9.5" letter-spacing="1.1" style="" text-anchor="middle">Assen</text><text x="1129.4" y="185.0" fill="#6a3a45" font-size="7.5" letter-spacing="0.9" style="" text-anchor="middle">Gieten</text><text x="1195.6" y="188.4" fill="#6a3a45" font-size="7.5" letter-spacing="0.9" style="" text-anchor="middle">Stadskanaal</text><text x="876.5" y="226.3" fill="#6a3a45" font-size="7.5" letter-spacing="0.9" style="" text-anchor="middle">Wolvega</text><text x="1105.1" y="215.6" fill="#a8608a" font-size="7.5" letter-spacing="0.9" style="font-style:italic;" text-anchor="middle">Drenthe</text><text x="1045.3" y="231.6" fill="#6a3a45" font-size="7.5" letter-spacing="0.9" style="" text-anchor="middle">Beilen</text><text x="1228.7" y="227.1" fill="#6a3a45" font-size="7.5" letter-spacing="0.9" style="" text-anchor="middle">Ter Apel</text><text x="916.4" y="256.0" fill="#6a3a45" font-size="7.5" letter-spacing="0.9" style="" text-anchor="middle">Steenwijk</text><text x="1172.9" y="255.5" fill="#5a2e38" font-size="9.5" letter-spacing="1.1" style="" text-anchor="middle">Emmen</text><text x="791.5" y="282.1" fill="#6a3a45" font-size="7.5" letter-spacing="0.9" style="" text-anchor="middle">Emmeloord</text><text x="1033.4" y="278.6" fill="#6a3a45" font-size="7.5" letter-spacing="0.9" style="" text-anchor="middle">Hoogeveen</text><text x="1203.5" y="276.8" fill="#6a3a45" font-size="7.5" letter-spacing="0.9" style="" text-anchor="middle">Klazienaveen</text><text x="742.3" y="296.7" fill="#6a3a45" font-size="7.5" letter-spacing="0.9" style="" text-anchor="middle">Urk</text><text x="778.2" y="236.9" fill="#6a3a45" font-size="7.5" letter-spacing="0.9" style="" text-anchor="middle">Lemmer</text><text x="941.7" y="287.4" fill="#6a3a45" font-size="7.5" letter-spacing="0.9" style="" text-anchor="middle">Meppel</text><text x="1121.1" y="298.5" fill="#6a3a45" font-size="7.5" letter-spacing="0.9" style="" text-anchor="middle">Coevorden</text><text x="944.3" y="302.8" fill="#6a3a45" font-size="7.5" letter-spacing="0.9" style="" text-anchor="middle">Staphorst</text><text x="1251.3" y="291.4" fill="#70782c" font-size="7.5" letter-spacing="0.9" style="font-style:italic;" text-anchor="middle">Naturpark</text><text x="1251.3" y="298.0" fill="#70782c" font-size="7.5" letter-spacing="0.9" style="font-style:italic;" text-anchor="middle">Bourtanger</text><text x="1251.3" y="304.5" fill="#70782c" font-size="7.5" letter-spacing="0.9" style="font-style:italic;" text-anchor="middle">Moor -</text><text x="1251.3" y="311.3" fill="#70782c" font-size="7.5" letter-spacing="0.9" style="font-style:italic;" text-anchor="middle">Veenland</text><text x="1159.6" y="314.5" fill="#6a3a45" font-size="7.5" letter-spacing="0.9" style="" text-anchor="middle">Emlichheim</text><text x="1081.2" y="327.3" fill="#6a3a45" font-size="7.5" letter-spacing="0.9" style="" text-anchor="middle">Hardenberg</text><text x="843.3" y="333.9" fill="#6a3a45" font-size="7.5" letter-spacing="0.9" style="" text-anchor="middle">Kampen</text><text x="780.9" y="344.0" fill="#6a3a45" font-size="7.5" letter-spacing="0.9" style="" text-anchor="middle">Dronten</text><text x="1017.4" y="345.9" fill="#6a3a45" font-size="7.5" letter-spacing="0.9" style="" text-anchor="middle">Ommen</text><text x="907.1" y="349.0" fill="#5a2e38" font-size="9.5" letter-spacing="1.1" style="" text-anchor="middle">Zwolle</text><text x="1196.8" y="351.8" fill="#6a3a45" font-size="7.5" letter-spacing="0.9" style="" text-anchor="middle">Neuenhaus</text><text x="822.0" y="369.6" fill="#6a3a45" font-size="7.5" letter-spacing="0.9" style="" text-anchor="middle">Elburg</text><text x="875.2" y="365.6" fill="#6a3a45" font-size="7.5" letter-spacing="0.9" style="" text-anchor="middle">Wezep</text><text x="1002.8" y="356.8" fill="#a8608a" font-size="7.5" letter-spacing="0.9" style="font-style:italic;" text-anchor="middle">Overijssel</text><text x="1063.9" y="365.1" fill="#6a3a45" font-size="7.5" letter-spacing="0.9" style="" text-anchor="middle">Vroomshoop</text><text x="1231.4" y="372.8" fill="#6a3a45" font-size="7.5" letter-spacing="0.9" style="" text-anchor="middle">Nordhorn</text><text x="888.5" y="388.7" fill="#6a3a45" font-size="7.5" letter-spacing="0.9" style="" text-anchor="middle">Heerde</text><text x="966.9" y="389.5" fill="#6a3a45" font-size="7.5" letter-spacing="0.9" style="" text-anchor="middle">Raalte</text><text x="1079.9" y="382.1" fill="#6a3a45" font-size="7.5" letter-spacing="0.9" style="" text-anchor="middle">Vriezenveen</text><text x="802.1" y="392.2" fill="#6a3a45" font-size="7.5" letter-spacing="0.9" style="" text-anchor="middle">Nunspeet</text><text x="1210.1" y="393.5" fill="#6a3a45" font-size="7.5" letter-spacing="0.9" style="" text-anchor="middle">Denekamp</text><text x="1030.7" y="398.8" fill="#6a3a45" font-size="7.5" letter-spacing="0.9" style="" text-anchor="middle">Nijverdal</text><text x="1097.2" y="399.3" fill="#6a3a45" font-size="7.5" letter-spacing="0.9" style="" text-anchor="middle">Almelo</text><text x="749.0" y="402.3" fill="#6a3a45" font-size="7.5" letter-spacing="0.9" style="" text-anchor="middle">Harderwijk</text><text x="869.9" y="402.3" fill="#6a3a45" font-size="7.5" letter-spacing="0.9" style="" text-anchor="middle">Epe</text><text x="750.3" y="418.2" fill="#6a3a45" font-size="7.5" letter-spacing="0.9" style="" text-anchor="middle">Ermelo</text><text x="1048.0" y="416.1" fill="#6a3a45" font-size="7.5" letter-spacing="0.9" style="" text-anchor="middle">Rijssen</text><text x="1126.4" y="418.0" fill="#6a3a45" font-size="7.5" letter-spacing="0.9" style="" text-anchor="middle">Borne</text><text x="1179.5" y="414.8" fill="#6a3a45" font-size="7.5" letter-spacing="0.9" style="" text-anchor="middle">Oldenzaal</text><text x="1254.0" y="418.0" fill="#6a3a45" font-size="7.5" letter-spacing="0.9" style="" text-anchor="middle">Bad Bentheim</text><text x="864.6" y="421.4" fill="#6a3a45" font-size="7.5" letter-spacing="0.9" style="" text-anchor="middle">Vaassen</text><text x="745.0" y="430.7" fill="#6a3a45" font-size="7.5" letter-spacing="0.9" style="" text-anchor="middle">Putten</text><text x="1139.7" y="429.9" fill="#6a3a45" font-size="7.5" letter-spacing="0.9" style="" text-anchor="middle">Hengelo</text><text x="1208.8" y="430.7" fill="#6a3a45" font-size="7.5" letter-spacing="0.9" style="" text-anchor="middle">Losser</text><text x="928.4" y="433.4" fill="#5a2e38" font-size="9.5" letter-spacing="1.1" style="" text-anchor="middle">Deventer</text><text x="1067.9" y="440.8" fill="#6a3a45" font-size="7.5" letter-spacing="0.9" style="" text-anchor="middle">Goor</text><text x="703.8" y="444.8" fill="#6a3a45" font-size="7.5" letter-spacing="0.9" style="" text-anchor="middle">Nijkerk</text><text x="815.4" y="445.3" fill="#70782c" font-size="7.5" letter-spacing="0.9" style="font-style:italic;" text-anchor="middle">Veluwe</text><text x="863.3" y="446.7" fill="#5a2e38" font-size="9.5" letter-spacing="1.1" style="" text-anchor="middle">Apeldoorn</text><text x="1172.9" y="444.8" fill="#5a2e38" font-size="9.5" letter-spacing="1.1" style="" text-anchor="middle">Enschede</text><text x="745.0" y="456.0" fill="#6a3a45" font-size="7.5" letter-spacing="0.9" style="" text-anchor="middle">Voorthuizen</text><text x="671.9" y="466.1" fill="#5a2e38" font-size="9.5" letter-spacing="1.1" style="" text-anchor="middle">Amersfoort</text><text x="1012.1" y="465.3" fill="#6a3a45" font-size="7.5" letter-spacing="0.9" style="" text-anchor="middle">Lochem</text><text x="1121.1" y="466.6" fill="#6a3a45" font-size="7.5" letter-spacing="0.9" style="" text-anchor="middle">Haaksbergen</text><text x="738.3" y="471.9" fill="#6a3a45" font-size="7.5" letter-spacing="0.9" style="" text-anchor="middle">Barneveld</text><text x="685.2" y="475.1" fill="#6a3a45" font-size="7.5" letter-spacing="0.9" style="" text-anchor="middle">Leusden</text><text x="901.8" y="475.1" fill="#a8608a" font-size="7.5" letter-spacing="0.9" style="font-style:italic;" text-anchor="middle">Gelderland</text><text x="1048.0" y="479.9" fill="#6a3a45" font-size="7.5" letter-spacing="0.9" style="" text-anchor="middle">Borculo</text><text x="1091.8" y="484.1" fill="#6a3a45" font-size="7.5" letter-spacing="0.9" style="" text-anchor="middle">Eibergen</text><text x="1208.8" y="493.2" fill="#6a3a45" font-size="7.5" letter-spacing="0.9" style="" text-anchor="middle">Ahaus</text><text x="764.9" y="502.5" fill="#5a2e38" font-size="9.5" letter-spacing="1.1" style="" text-anchor="middle">Ede</text><text x="1079.9" y="503.5" fill="#6a3a45" font-size="7.5" letter-spacing="0.9" style="" text-anchor="middle">Groenlo</text><text x="1149.0" y="505.7" fill="#6a3a45" font-size="7.5" letter-spacing="0.9" style="" text-anchor="middle">Vreden</text><text x="921.7" y="513.1" fill="#6a3a45" font-size="7.5" letter-spacing="0.9" style="" text-anchor="middle">Doesburg</text><text x="767.6" y="518.4" fill="#6a3a45" font-size="7.5" letter-spacing="0.9" style="" text-anchor="middle">Bennekom</text><text x="1179.5" y="520.3" fill="#6a3a45" font-size="7.5" letter-spacing="0.9" style="" text-anchor="middle">Stadtlohn</text><text x="846.0" y="523.2" fill="#5a2e38" font-size="9.5" letter-spacing="1.1" style="" text-anchor="middle">Arnhem</text><text x="1115.7" y="526.9" fill="#6a3a45" font-size="7.5" letter-spacing="0.9" style="" text-anchor="middle">Winterswijk</text><text x="763.6" y="529.0" fill="#6a3a45" font-size="7.5" letter-spacing="0.9" style="" text-anchor="middle">Wageningen</text><text x="972.2" y="529.0" fill="#6a3a45" font-size="7.5" letter-spacing="0.9" style="" text-anchor="middle">Doetinchem</text><text x="1208.8" y="532.2" fill="#6a3a45" font-size="7.5" letter-spacing="0.9" style="" text-anchor="middle">Gescher</text><text x="855.3" y="538.3" fill="#6a3a45" font-size="7.5" letter-spacing="0.9" style="" text-anchor="middle">Huissen</text><text x="901.8" y="539.7" fill="#6a3a45" font-size="7.5" letter-spacing="0.9" style="" text-anchor="middle">Zevenaar</text><text x="1067.9" y="541.5" fill="#6a3a45" font-size="7.5" letter-spacing="0.9" style="" text-anchor="middle">Aalten</text><text x="1259.3" y="536.2" fill="#6a3a45" font-size="7.5" letter-spacing="0.9" style="" text-anchor="middle">Coesfeld</text><text x="687.8" y="555.1" fill="#6a3a45" font-size="7.5" letter-spacing="0.9" style="" text-anchor="middle">Tiel</text><text x="743.7" y="555.1" fill="#6a3a45" font-size="7.5" letter-spacing="0.9" style="" text-anchor="middle">Druten</text><text x="828.7" y="569.7" fill="#5a2e38" font-size="9.5" letter-spacing="1.1" style="" text-anchor="middle">Nijmegen</text><text x="956.3" y="570.2" fill="#6a3a45" font-size="7.5" letter-spacing="0.9" style="" text-anchor="middle">Emmerich</text><text x="956.3" y="576.9" fill="#6a3a45" font-size="7.5" letter-spacing="0.9" style="" text-anchor="middle">am Rhein</text><text x="1078.5" y="571.6" fill="#6a3a45" font-size="7.5" letter-spacing="0.9" style="" text-anchor="middle">Bocholt</text><text x="1161.0" y="569.7" fill="#6a3a45" font-size="7.5" letter-spacing="0.9" style="" text-anchor="middle">Borken</text><text x="783.5" y="583.0" fill="#6a3a45" font-size="7.5" letter-spacing="0.9" style="" text-anchor="middle">Wijchen</text><text x="921.7" y="588.0" fill="#6a3a45" font-size="7.5" letter-spacing="0.9" style="" text-anchor="middle">Kleve</text><text x="852.6" y="592.8" fill="#6a3a45" font-size="7.5" letter-spacing="0.9" style="" text-anchor="middle">Groesbeek</text><text x="1154.3" y="594.7" fill="#6a3a45" font-size="7.5" letter-spacing="0.9" style="" text-anchor="middle">Raesfeld</text><text x="718.4" y="595.0" fill="#6a3a45" font-size="7.5" letter-spacing="0.9" style="" text-anchor="middle">Oss</text><text x="788.8" y="598.7" fill="#6a3a45" font-size="7.5" letter-spacing="0.9" style="" text-anchor="middle">Grave</text><text x="1006.8" y="598.7" fill="#6a3a45" font-size="7.5" letter-spacing="0.9" style="" text-anchor="middle">Rees</text><text x="972.2" y="604.8" fill="#6a3a45" font-size="7.5" letter-spacing="0.9" style="" text-anchor="middle">Kalkar</text><text x="1071.9" y="607.7" fill="#6a3a45" font-size="7.5" letter-spacing="0.9" style="" text-anchor="middle">Hamminkeln</text><text x="718.4" y="606.1" fill="#6a3a45" font-size="7.5" letter-spacing="0.9" style="" text-anchor="middle">Heesch</text><text x="835.3" y="608.8" fill="#6a3a45" font-size="7.5" letter-spacing="0.9" style="" text-anchor="middle">Cuijk</text><text x="1214.1" y="609.6" fill="#6a3a45" font-size="7.5" letter-spacing="0.9" style="" text-anchor="middle">Wulfen</text><text x="663.9" y="612.2" fill="#6a3a45" font-size="7.5" letter-spacing="0.9" style="" text-anchor="middle">Rosmalen</text><text x="864.6" y="617.6" fill="#6a3a45" font-size="7.5" letter-spacing="0.9" style="" text-anchor="middle">Gennep</text><text x="1164.9" y="620.2" fill="#6a3a45" font-size="7.5" letter-spacing="0.9" style="" text-anchor="middle">Schermbeck</text><text x="928.4" y="626.6" fill="#6a3a45" font-size="7.5" letter-spacing="0.9" style="" text-anchor="middle">Goch</text><text x="966.9" y="628.7" fill="#6a3a45" font-size="7.5" letter-spacing="0.9" style="" text-anchor="middle">Uedem</text><text x="1026.7" y="630.6" fill="#6a3a45" font-size="7.5" letter-spacing="0.9" style="" text-anchor="middle">Xanten</text><text x="1081.2" y="631.4" fill="#6a3a45" font-size="7.5" letter-spacing="0.9" style="" text-anchor="middle">Wesel</text><text x="1196.8" y="631.4" fill="#6a3a45" font-size="7.5" letter-spacing="0.9" style="" text-anchor="middle">Dorsten</text><text x="746.3" y="631.4" fill="#6a3a45" font-size="7.5" letter-spacing="0.9" style="" text-anchor="middle">Uden</text><text x="856.6" y="635.4" fill="#6a3a45" font-size="7.5" letter-spacing="0.9" style="" text-anchor="middle">Boxmeer</text><text x="1235.3" y="634.8" fill="#6a3a45" font-size="7.5" letter-spacing="0.9" style="" text-anchor="middle">Marl</text><text x="1270.0" y="646.0" fill="#6a3a45" font-size="7.5" letter-spacing="0.9" style="" text-anchor="middle">Recklinghausen</text><text x="723.7" y="646.0" fill="#6a3a45" font-size="7.5" letter-spacing="0.9" style="" text-anchor="middle">Veghel</text><text x="1102.5" y="651.3" fill="#6a3a45" font-size="7.5" letter-spacing="0.9" style="" text-anchor="middle">Voerde</text><text x="1182.2" y="649.5" fill="#6a3a45" font-size="7.5" letter-spacing="0.9" style="" text-anchor="middle">Kirchhellen</text><text x="957.6" y="657.2" fill="#6a3a45" font-size="7.5" letter-spacing="0.9" style="" text-anchor="middle">Kevelaer</text><text x="1203.5" y="659.8" fill="#6a3a45" font-size="7.5" letter-spacing="0.9" style="" text-anchor="middle">Gladbeck</text><text x="1119.7" y="663.3" fill="#6a3a45" font-size="7.5" letter-spacing="0.9" style="" text-anchor="middle">Dinslaken</text><text x="770.2" y="664.6" fill="#6a3a45" font-size="7.5" letter-spacing="0.9" style="" text-anchor="middle">Gemert</text><text x="865.9" y="675.2" fill="#6a3a45" font-size="7.5" letter-spacing="0.9" style="" text-anchor="middle">Venray</text><text x="1184.9" y="677.4" fill="#5a2e38" font-size="9.5" letter-spacing="1.1" style="" text-anchor="middle">Bottrop</text><text x="982.9" y="678.4" fill="#6a3a45" font-size="7.5" letter-spacing="0.9" style="" text-anchor="middle">Geldern</text><text x="1057.3" y="683.7" fill="#6a3a45" font-size="7.5" letter-spacing="0.9" style="" text-anchor="middle">Kamp-Lintfort</text><text x="674.6" y="682.7" fill="#6a3a45" font-size="7.5" letter-spacing="0.9" style="" text-anchor="middle">Best</text><text x="760.9" y="690.4" fill="#5a2e38" font-size="9.5" letter-spacing="1.1" style="" text-anchor="middle">Helmond</text><text x="413.3" y="366.4" fill="#6a3a45" font-size="7.5" letter-spacing="0.9" style="" text-anchor="middle">IJmuiden</text><text x="486.4" y="370.9" fill="#6a3a45" font-size="7.5" letter-spacing="0.9" style="" text-anchor="middle">Zaandam</text><text x="530.2" y="351.5" fill="#6a3a45" font-size="7.5" letter-spacing="0.9" style="" text-anchor="middle">Purmerend</text><text x="554.2" y="365.6" fill="#6a3a45" font-size="7.5" letter-spacing="0.9" style="" text-anchor="middle">Monnickendam</text><text x="422.6" y="388.7" fill="#5a2e38" font-size="9.5" letter-spacing="1.1" style="" text-anchor="middle">Haarlem</text><text x="506.3" y="394.8" fill="#5a2e38" font-size="9.5" letter-spacing="1.1" style="" text-anchor="middle">Amsterdam</text><text x="417.3" y="400.7" fill="#6a3a45" font-size="7.5" letter-spacing="0.9" style="" text-anchor="middle">Heemstede</text><text x="530.2" y="404.7" fill="#6a3a45" font-size="7.5" letter-spacing="0.9" style="" text-anchor="middle">Diemen</text><text x="441.2" y="416.9" fill="#6a3a45" font-size="7.5" letter-spacing="0.9" style="" text-anchor="middle">Hoofddorp</text><text x="495.7" y="417.4" fill="#6a3a45" font-size="7.5" letter-spacing="0.9" style="" text-anchor="middle">Amstelveen</text><text x="555.5" y="416.1" fill="#6a3a45" font-size="7.5" letter-spacing="0.9" style="" text-anchor="middle">Weesp</text><text x="624.6" y="420.1" fill="#6a3a45" font-size="7.5" letter-spacing="0.9" style="" text-anchor="middle">Huizen</text><text x="421.3" y="430.2" fill="#6a3a45" font-size="7.5" letter-spacing="0.9" style="" text-anchor="middle">Nieuw-Vennep</text><text x="358.8" y="438.1" fill="#6a3a45" font-size="7.5" letter-spacing="0.9" style="" text-anchor="middle">Noordwijk</text><text x="485.1" y="437.9" fill="#6a3a45" font-size="7.5" letter-spacing="0.9" style="" text-anchor="middle">Uithoorn</text><text x="616.6" y="432.8" fill="#6a3a45" font-size="7.5" letter-spacing="0.9" style="" text-anchor="middle">Laren</text><text x="600.7" y="443.5" fill="#5a2e38" font-size="9.5" letter-spacing="1.1" style="" text-anchor="middle">Hilversum</text><text x="494.4" y="450.6" fill="#6a3a45" font-size="7.5" letter-spacing="0.9" style="" text-anchor="middle">Mijdrecht</text><text x="346.8" y="452.0" fill="#6a3a45" font-size="7.5" letter-spacing="0.9" style="" text-anchor="middle">Katwijk</text><text x="373.4" y="465.3" fill="#5a2e38" font-size="9.5" letter-spacing="1.1" style="" text-anchor="middle">Leiden</text><text x="427.9" y="470.0" fill="#6a3a45" font-size="7.5" letter-spacing="0.9" style="" text-anchor="middle">Alphen aan</text><text x="427.9" y="477.2" fill="#6a3a45" font-size="7.5" letter-spacing="0.9" style="" text-anchor="middle">den Rijn</text><text x="555.5" y="472.4" fill="#6a3a45" font-size="7.5" letter-spacing="0.9" style="" text-anchor="middle">Maarssen</text><text x="611.3" y="475.1" fill="#6a3a45" font-size="7.5" letter-spacing="0.9" style="" text-anchor="middle">Bilthoven</text><text x="358.8" y="475.1" fill="#6a3a45" font-size="7.5" letter-spacing="0.9" style="" text-anchor="middle">Voorschoten</text><text x="547.5" y="482.5" fill="#6a3a45" font-size="7.5" letter-spacing="0.9" style="" text-anchor="middle">Vleuten</text><text x="313.6" y="491.8" fill="#5a2e38" font-size="9.5" letter-spacing="1.1" style="" text-anchor="middle">Den Haag</text><text x="587.4" y="491.3" fill="#a8608a" font-size="7.5" letter-spacing="0.9" style="font-style:italic;" text-anchor="middle">Utrecht</text><text x="499.7" y="489.7" fill="#6a3a45" font-size="7.5" letter-spacing="0.9" style="" text-anchor="middle">Woerden</text><text x="430.6" y="493.7" fill="#6a3a45" font-size="7.5" letter-spacing="0.9" style="" text-anchor="middle">Boskoop</text><text x="315.0" y="503.3" fill="#6a3a45" font-size="7.5" letter-spacing="0.9" style="" text-anchor="middle">Rijswijk</text><text x="425.3" y="503.3" fill="#6a3a45" font-size="7.5" letter-spacing="0.9" style="" text-anchor="middle">Waddinxveen</text><text x="571.4" y="505.7" fill="#6a3a45" font-size="7.5" letter-spacing="0.9" style="" text-anchor="middle">Nieuwegein</text><text x="441.2" y="513.9" fill="#6a3a45" font-size="7.5" letter-spacing="0.9" style="" text-anchor="middle">Gouda</text><text x="264.5" y="517.1" fill="#6a3a45" font-size="7.5" letter-spacing="0.9" style="" text-anchor="middle">'s-Gravenzande</text><text x="340.2" y="521.1" fill="#a8608a" font-size="7.5" letter-spacing="0.9" style="font-style:italic;" text-anchor="middle">Zuid-Holland</text><text x="572.8" y="521.6" fill="#6a3a45" font-size="7.5" letter-spacing="0.9" style="" text-anchor="middle">Vianen</text><text x="414.6" y="525.1" fill="#6a3a45" font-size="7.5" letter-spacing="0.9" style="" text-anchor="middle">Nieuwerkerk</text><text x="414.6" y="532.2" fill="#6a3a45" font-size="7.5" letter-spacing="0.9" style="" text-anchor="middle">aan den IJssel</text><text x="493.0" y="535.7" fill="#6a3a45" font-size="7.5" letter-spacing="0.9" style="" text-anchor="middle">Schoonhoven</text><text x="616.6" y="532.2" fill="#6a3a45" font-size="7.5" letter-spacing="0.9" style="" text-anchor="middle">Culemborg</text><text x="295.0" y="543.7" fill="#6a3a45" font-size="7.5" letter-spacing="0.9" style="" text-anchor="middle">Maassluis</text><text x="369.4" y="542.9" fill="#5a2e38" font-size="9.5" letter-spacing="1.1" style="" text-anchor="middle">Rotterdam</text><text x="572.8" y="553.5" fill="#6a3a45" font-size="7.5" letter-spacing="0.9" style="" text-anchor="middle">Leerdam</text><text x="624.6" y="557.8" fill="#6a3a45" font-size="7.5" letter-spacing="0.9" style="" text-anchor="middle">Geldermalsen</text><text x="369.4" y="560.4" fill="#5a2e38" font-size="7.5" letter-spacing="0.9" style="font-style:italic;" text-anchor="middle">IJsselmonde</text><text x="388.0" y="565.7" fill="#6a3a45" font-size="7.5" letter-spacing="0.9" style="" text-anchor="middle">Barendrecht</text><text x="257.8" y="573.2" fill="#6a3a45" font-size="7.5" letter-spacing="0.9" style="" text-anchor="middle">Hellevoetsluis</text><text x="318.9" y="569.7" fill="#6a3a45" font-size="7.5" letter-spacing="0.9" style="" text-anchor="middle">Spijkenisse</text><text x="534.2" y="574.8" fill="#6a3a45" font-size="7.5" letter-spacing="0.9" style="" text-anchor="middle">Gorinchem</text><text x="431.9" y="579.5" fill="#5a2e38" font-size="9.5" letter-spacing="1.1" style="" text-anchor="middle">Dordrecht</text><text x="188.7" y="581.7" fill="#6a3a45" font-size="7.5" letter-spacing="0.9" style="" text-anchor="middle">Ouddorp</text><text x="629.9" y="582.7" fill="#6a3a45" font-size="7.5" letter-spacing="0.9" style="" text-anchor="middle">Zaltbommel</text><text x="540.9" y="588.0" fill="#5a2e38" font-size="7.5" letter-spacing="0.9" style="font-style:italic;" text-anchor="middle">Land van</text><text x="540.9" y="594.6" fill="#5a2e38" font-size="7.5" letter-spacing="0.9" style="font-style:italic;" text-anchor="middle">Heusden</text><text x="540.9" y="601.3" fill="#5a2e38" font-size="7.5" letter-spacing="0.9" style="font-style:italic;" text-anchor="middle">en Altena</text><text x="285.7" y="593.6" fill="#70782c" font-size="7.5" letter-spacing="0.9" style="font-style:italic;" text-anchor="middle">Haringvliet</text><text x="354.8" y="592.3" fill="#5a2e38" font-size="7.5" letter-spacing="0.9" style="font-style:italic;" text-anchor="middle">Hoeksche</text><text x="354.8" y="598.7" fill="#5a2e38" font-size="7.5" letter-spacing="0.9" style="font-style:italic;" text-anchor="middle">Waard</text><text x="611.3" y="591.5" fill="#5a2e38" font-size="7.5" letter-spacing="0.9" style="font-style:italic;" text-anchor="middle">Bommelerwaard</text><text x="111.6" y="596.3" fill="#70782c" font-size="7.5" letter-spacing="0.9" style="font-style:italic;" text-anchor="middle">Voordelta</text><text x="265.8" y="599.0" fill="#6a3a45" font-size="7.5" letter-spacing="0.9" style="" text-anchor="middle">Middelharnis</text><text x="203.3" y="606.1" fill="#70782c" font-size="7.5" letter-spacing="0.9" style="font-style:italic;" text-anchor="middle">Grevelingen</text><text x="191.4" y="621.3" fill="#5a2e38" font-size="7.5" letter-spacing="0.9" style="font-style:italic;" text-anchor="middle">Schouwen-</text><text x="191.4" y="627.9" fill="#5a2e38" font-size="7.5" letter-spacing="0.9" style="font-style:italic;" text-anchor="middle">Duiveland</text><text x="184.7" y="634.6" fill="#6a3a45" font-size="7.5" letter-spacing="0.9" style="" text-anchor="middle">Zierikzee</text><text x="558.2" y="623.4" fill="#6a3a45" font-size="7.5" letter-spacing="0.9" style="" text-anchor="middle">Waalwijk</text><text x="619.3" y="622.1" fill="#5a2e38" font-size="9.5" letter-spacing="1.1" style="" text-anchor="middle">'s-Hertogenbosch</text><text x="410.6" y="636.2" fill="#6a3a45" font-size="7.5" letter-spacing="0.9" style="" text-anchor="middle">Zevenbergen</text><text x="494.4" y="636.2" fill="#6a3a45" font-size="7.5" letter-spacing="0.9" style="" text-anchor="middle">Oosterhout</text><text x="313.6" y="655.8" fill="#6a3a45" font-size="7.5" letter-spacing="0.9" style="" text-anchor="middle">Steenbergen</text><text x="469.1" y="654.0" fill="#5a2e38" font-size="9.5" letter-spacing="1.1" style="" text-anchor="middle">Breda</text><text x="514.3" y="655.3" fill="#6a3a45" font-size="7.5" letter-spacing="0.9" style="" text-anchor="middle">Rijen</text><text x="196.7" y="661.4" fill="#70782c" font-size="7.5" letter-spacing="0.9" style="font-style:italic;" text-anchor="middle">Oosterschelde</text><text x="419.9" y="660.6" fill="#6a3a45" font-size="7.5" letter-spacing="0.9" style="" text-anchor="middle">Etten-Leur</text><text x="574.1" y="658.8" fill="#6a3a45" font-size="7.5" letter-spacing="0.9" style="" text-anchor="middle">Oisterwijk</text><text x="284.4" y="672.0" fill="#6a3a45" font-size="7.5" letter-spacing="0.9" style="" text-anchor="middle">Tholen</text><text x="362.8" y="673.1" fill="#6a3a45" font-size="7.5" letter-spacing="0.9" style="" text-anchor="middle">Roosendaal</text><text x="555.5" y="675.2" fill="#a8608a" font-size="7.5" letter-spacing="0.9" style="font-style:italic;" text-anchor="middle">Noord-Brabant</text><text x="304.3" y="682.7" fill="#6a3a45" font-size="7.5" letter-spacing="0.9" style="" text-anchor="middle">Bergen op</text><text x="304.3" y="689.3" fill="#6a3a45" font-size="7.5" letter-spacing="0.9" style="" text-anchor="middle">Zoom</text><text x="138.2" y="687.2" fill="#a8608a" font-size="7.5" letter-spacing="0.9" style="font-style:italic;" text-anchor="middle">Zeeland</text><text x="225.9" y="686.4" fill="#6a3a45" font-size="7.5" letter-spacing="0.9" style="" text-anchor="middle">Yerseke</text><text x="587.4" y="689.1" fill="#6a3a45" font-size="7.5" letter-spacing="0.9" style="" text-anchor="middle">Hilvarenbeek</text></g><rect x="1.2" y="26" width="1273.6" height="690" fill="none" stroke="#e5404d" stroke-width="3"/></svg></div>

<!-- bottom clip cover -->
<div class="a" style="left:0;top:1507px;width:2428px;height:29px;background:#f0f0f0"></div>
<div class="a" style="left:28px;top:1506px;width:2371px;height:1px;background:#b2b2b2"></div>

<!-- scrollbar -->
<div class="a" style="left:2370px;top:83px;width:29px;height:1424px;border-left:1px solid #bbb;border-right:1px solid #b4b4b4;background:linear-gradient(90deg,#fdfdfd,#f1f1f1)"></div>
<div class="a" style="left:2371px;top:109px;width:27px;height:2px;background:#c4c4c4"></div>
<svg class="a" style="left:2370px;top:85px" width="29" height="24"><path d="M6 15 L14 7.5 L22 15 Z" fill="#555"/></svg>
<div class="a" style="left:2371px;top:1077px;width:27px;height:401px;background:#e5e5e5;border-top:2px solid #bbb;border-bottom:2px solid #bbb"></div>
<svg class="a" style="left:2370px;top:1480px" width="29" height="26"><path d="M6 8 L22 8 L14 15.5 Z" fill="#555"/></svg>
</body></html>
